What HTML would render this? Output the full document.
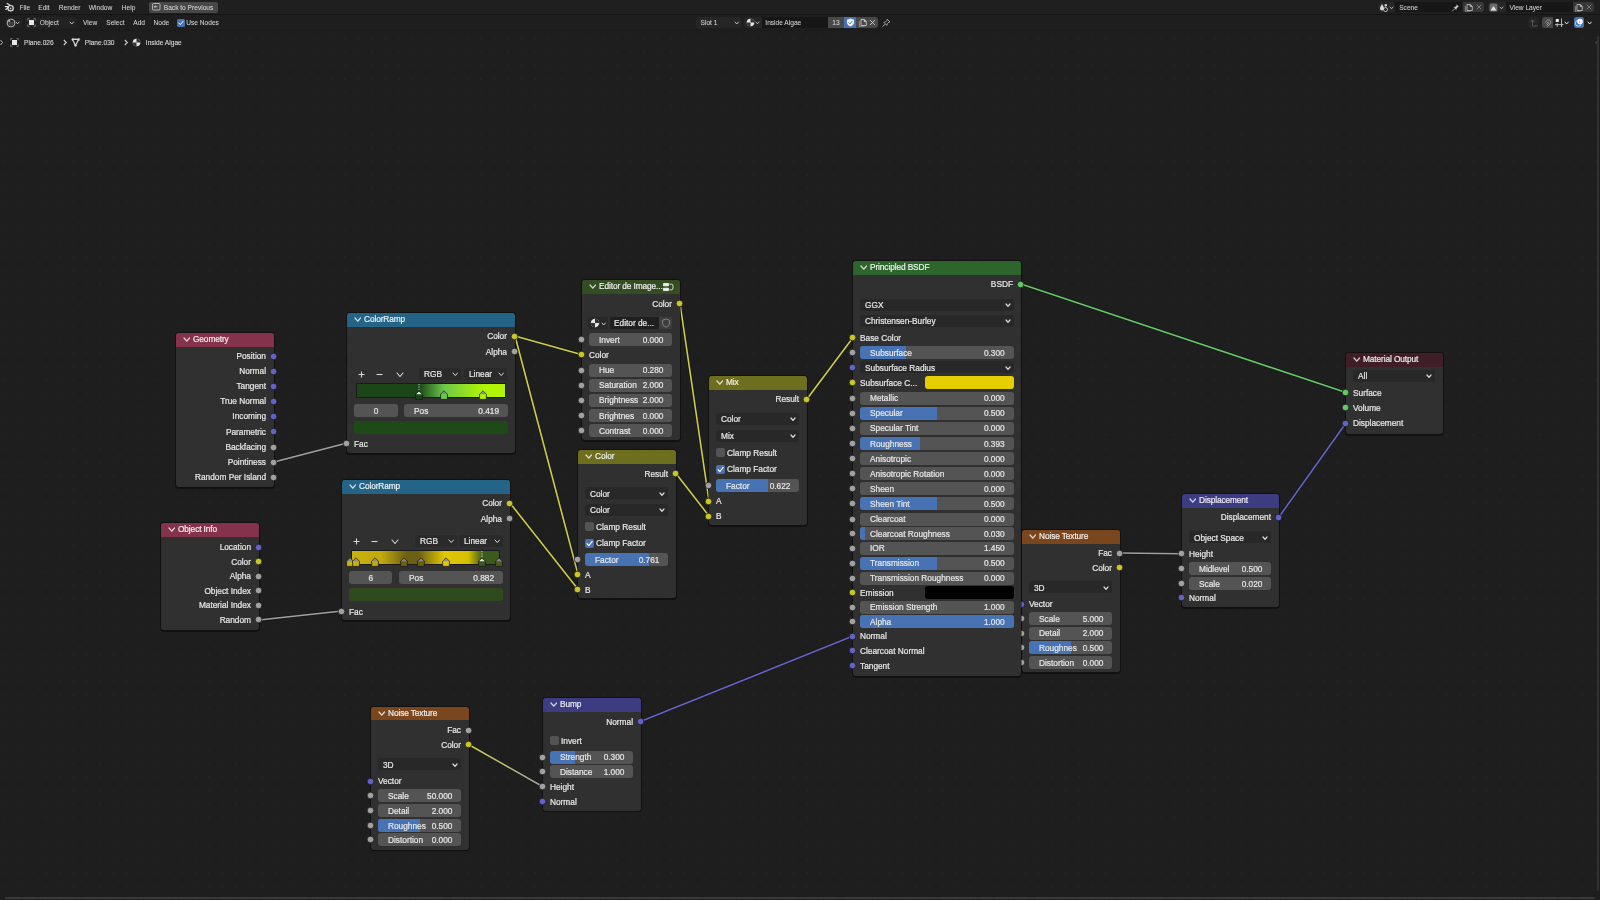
<!DOCTYPE html><html><head><meta charset="utf-8"><style>
html,body{margin:0;padding:0}body{width:1600px;height:900px;background:#1e1e1e;overflow:hidden;position:relative;font-family:"Liberation Sans",sans-serif}
.a{position:absolute}.t{position:absolute;white-space:nowrap;font-size:8px;-webkit-text-stroke:0.22px currentColor}#w{position:absolute;left:0;top:0;width:1600px;height:900px;will-change:transform}
</style></head><body><div id="w">
<div class="a" style="left:0;top:31px;width:1600px;height:869px;background-image:radial-gradient(circle at 1px 1px, #232323 0.7px, transparent 1.1px);background-size:13.6px 13.7px;background-position:4px 6px"></div>
<svg class="a" style="left:0;top:0" width="1600" height="900"><defs><linearGradient id="lg0" gradientUnits="userSpaceOnUse" x1="274" y1="462" x2="347" y2="443"><stop offset="0" stop-color="#a1a1a1"/><stop offset="1" stop-color="#a1a1a1"/></linearGradient><linearGradient id="lg1" gradientUnits="userSpaceOnUse" x1="259" y1="620" x2="342" y2="611"><stop offset="0" stop-color="#a1a1a1"/><stop offset="1" stop-color="#a1a1a1"/></linearGradient><linearGradient id="lg2" gradientUnits="userSpaceOnUse" x1="515" y1="336" x2="582" y2="354.7"><stop offset="0" stop-color="#cdcd4a"/><stop offset="1" stop-color="#cdcd4a"/></linearGradient><linearGradient id="lg3" gradientUnits="userSpaceOnUse" x1="515" y1="336" x2="578" y2="574.4"><stop offset="0" stop-color="#cdcd4a"/><stop offset="1" stop-color="#cdcd4a"/></linearGradient><linearGradient id="lg4" gradientUnits="userSpaceOnUse" x1="510" y1="503" x2="578" y2="589.2"><stop offset="0" stop-color="#cdcd4a"/><stop offset="1" stop-color="#cdcd4a"/></linearGradient><linearGradient id="lg5" gradientUnits="userSpaceOnUse" x1="680" y1="303.5" x2="709" y2="501"><stop offset="0" stop-color="#cdcd4a"/><stop offset="1" stop-color="#cdcd4a"/></linearGradient><linearGradient id="lg6" gradientUnits="userSpaceOnUse" x1="676" y1="473.4" x2="709" y2="516"><stop offset="0" stop-color="#cdcd4a"/><stop offset="1" stop-color="#cdcd4a"/></linearGradient><linearGradient id="lg7" gradientUnits="userSpaceOnUse" x1="807" y1="399" x2="853" y2="337.4"><stop offset="0" stop-color="#cdcd4a"/><stop offset="1" stop-color="#cdcd4a"/></linearGradient><linearGradient id="lg8" gradientUnits="userSpaceOnUse" x1="1021" y1="284" x2="1346" y2="392.5"><stop offset="0" stop-color="#63c763"/><stop offset="1" stop-color="#63c763"/></linearGradient><linearGradient id="lg9" gradientUnits="userSpaceOnUse" x1="1279" y1="517" x2="1346" y2="423"><stop offset="0" stop-color="#6363c7"/><stop offset="1" stop-color="#6363c7"/></linearGradient><linearGradient id="lg10" gradientUnits="userSpaceOnUse" x1="1120" y1="553" x2="1182" y2="553.8"><stop offset="0" stop-color="#a1a1a1"/><stop offset="1" stop-color="#a1a1a1"/></linearGradient><linearGradient id="lg11" gradientUnits="userSpaceOnUse" x1="469" y1="744.8" x2="543" y2="786.7"><stop offset="0" stop-color="#cdcd4a"/><stop offset="1" stop-color="#a1a1a1"/></linearGradient><linearGradient id="lg12" gradientUnits="userSpaceOnUse" x1="641" y1="721.2" x2="853" y2="636"><stop offset="0" stop-color="#6363c7"/><stop offset="1" stop-color="#6363c7"/></linearGradient></defs><line x1="274" y1="462" x2="347" y2="443" stroke="#101010" stroke-width="2.8" stroke-opacity="0.6"/><line x1="274" y1="462" x2="347" y2="443" stroke="url(#lg0)" stroke-width="1.6"/><line x1="259" y1="620" x2="342" y2="611" stroke="#101010" stroke-width="2.8" stroke-opacity="0.6"/><line x1="259" y1="620" x2="342" y2="611" stroke="url(#lg1)" stroke-width="1.6"/><line x1="515" y1="336" x2="582" y2="354.7" stroke="#101010" stroke-width="2.8" stroke-opacity="0.6"/><line x1="515" y1="336" x2="582" y2="354.7" stroke="url(#lg2)" stroke-width="1.6"/><line x1="515" y1="336" x2="578" y2="574.4" stroke="#101010" stroke-width="2.8" stroke-opacity="0.6"/><line x1="515" y1="336" x2="578" y2="574.4" stroke="url(#lg3)" stroke-width="1.6"/><line x1="510" y1="503" x2="578" y2="589.2" stroke="#101010" stroke-width="2.8" stroke-opacity="0.6"/><line x1="510" y1="503" x2="578" y2="589.2" stroke="url(#lg4)" stroke-width="1.6"/><line x1="680" y1="303.5" x2="709" y2="501" stroke="#101010" stroke-width="2.8" stroke-opacity="0.6"/><line x1="680" y1="303.5" x2="709" y2="501" stroke="url(#lg5)" stroke-width="1.6"/><line x1="676" y1="473.4" x2="709" y2="516" stroke="#101010" stroke-width="2.8" stroke-opacity="0.6"/><line x1="676" y1="473.4" x2="709" y2="516" stroke="url(#lg6)" stroke-width="1.6"/><line x1="807" y1="399" x2="853" y2="337.4" stroke="#101010" stroke-width="2.8" stroke-opacity="0.6"/><line x1="807" y1="399" x2="853" y2="337.4" stroke="url(#lg7)" stroke-width="1.6"/><line x1="1021" y1="284" x2="1346" y2="392.5" stroke="#101010" stroke-width="2.8" stroke-opacity="0.6"/><line x1="1021" y1="284" x2="1346" y2="392.5" stroke="url(#lg8)" stroke-width="1.6"/><line x1="1279" y1="517" x2="1346" y2="423" stroke="#101010" stroke-width="2.8" stroke-opacity="0.6"/><line x1="1279" y1="517" x2="1346" y2="423" stroke="url(#lg9)" stroke-width="1.6"/><line x1="1120" y1="553" x2="1182" y2="553.8" stroke="#101010" stroke-width="2.8" stroke-opacity="0.6"/><line x1="1120" y1="553" x2="1182" y2="553.8" stroke="url(#lg10)" stroke-width="1.6"/><line x1="469" y1="744.8" x2="543" y2="786.7" stroke="#101010" stroke-width="2.8" stroke-opacity="0.6"/><line x1="469" y1="744.8" x2="543" y2="786.7" stroke="url(#lg11)" stroke-width="1.6"/><line x1="641" y1="721.2" x2="853" y2="636" stroke="#101010" stroke-width="2.8" stroke-opacity="0.6"/><line x1="641" y1="721.2" x2="853" y2="636" stroke="url(#lg12)" stroke-width="1.6"/></svg>
<div class="a" style="left:175.0px;top:332.0px;width:100.0px;height:156.8px;background:rgba(0,0,0,0.42);border-radius:4px;"></div>
<div class="a" style="left:176.0px;top:333.0px;width:98.0px;height:154.0px;background:#303030;border-radius:3px;"></div>
<div class="a" style="left:176.0px;top:333.0px;width:98.0px;height:13.5px;background:#85334d;border-radius:3px;border-bottom-left-radius:0;border-bottom-right-radius:0;"></div>
<svg class="a" style="left:182.5px;top:337.1px;" width="7.6" height="5.2" viewBox="0 0 7.6 5.2"><polyline points="1,1 3.8,4.2 6.6,1" fill="none" stroke="rgba(255,255,255,0.78)" stroke-width="1.3" stroke-linecap="round" stroke-linejoin="round"/></svg>
<div class="t" style="left:193.0px;top:333.3px;font-size:8.3px;line-height:12px;color:rgba(255,255,255,0.86);letter-spacing:-0.1px">Geometry</div>
<div class="t" style="right:1334.0px;top:350.4px;font-size:8.3px;line-height:12px;color:#e6e6e6;">Position</div>
<svg class="a" style="left:269.2px;top:351.5px;" width="9" height="9" viewBox="0 0 9 9"><circle cx="4.5" cy="4.5" r="3.3" fill="#6363c7" stroke="#141414" stroke-width="0.7"/></svg>
<div class="t" style="right:1334.0px;top:365.4px;font-size:8.3px;line-height:12px;color:#e6e6e6;">Normal</div>
<svg class="a" style="left:269.2px;top:366.5px;" width="9" height="9" viewBox="0 0 9 9"><circle cx="4.5" cy="4.5" r="3.3" fill="#6363c7" stroke="#141414" stroke-width="0.7"/></svg>
<div class="t" style="right:1334.0px;top:380.4px;font-size:8.3px;line-height:12px;color:#e6e6e6;">Tangent</div>
<svg class="a" style="left:269.2px;top:381.5px;" width="9" height="9" viewBox="0 0 9 9"><circle cx="4.5" cy="4.5" r="3.3" fill="#6363c7" stroke="#141414" stroke-width="0.7"/></svg>
<div class="t" style="right:1334.0px;top:395.4px;font-size:8.3px;line-height:12px;color:#e6e6e6;">True Normal</div>
<svg class="a" style="left:269.2px;top:396.5px;" width="9" height="9" viewBox="0 0 9 9"><circle cx="4.5" cy="4.5" r="3.3" fill="#6363c7" stroke="#141414" stroke-width="0.7"/></svg>
<div class="t" style="right:1334.0px;top:410.4px;font-size:8.3px;line-height:12px;color:#e6e6e6;">Incoming</div>
<svg class="a" style="left:269.2px;top:411.5px;" width="9" height="9" viewBox="0 0 9 9"><circle cx="4.5" cy="4.5" r="3.3" fill="#6363c7" stroke="#141414" stroke-width="0.7"/></svg>
<div class="t" style="right:1334.0px;top:425.9px;font-size:8.3px;line-height:12px;color:#e6e6e6;">Parametric</div>
<svg class="a" style="left:269.2px;top:427.0px;" width="9" height="9" viewBox="0 0 9 9"><circle cx="4.5" cy="4.5" r="3.3" fill="#6363c7" stroke="#141414" stroke-width="0.7"/></svg>
<div class="t" style="right:1334.0px;top:441.4px;font-size:8.3px;line-height:12px;color:#e6e6e6;">Backfacing</div>
<svg class="a" style="left:269.2px;top:442.5px;" width="9" height="9" viewBox="0 0 9 9"><circle cx="4.5" cy="4.5" r="3.3" fill="#a1a1a1" stroke="#141414" stroke-width="0.7"/></svg>
<div class="t" style="right:1334.0px;top:456.4px;font-size:8.3px;line-height:12px;color:#e6e6e6;">Pointiness</div>
<svg class="a" style="left:269.2px;top:457.5px;" width="9" height="9" viewBox="0 0 9 9"><circle cx="4.5" cy="4.5" r="3.3" fill="#a1a1a1" stroke="#141414" stroke-width="0.7"/></svg>
<div class="t" style="right:1334.0px;top:471.4px;font-size:8.3px;line-height:12px;color:#e6e6e6;">Random Per Island</div>
<svg class="a" style="left:269.2px;top:472.5px;" width="9" height="9" viewBox="0 0 9 9"><circle cx="4.5" cy="4.5" r="3.3" fill="#a1a1a1" stroke="#141414" stroke-width="0.7"/></svg>
<div class="a" style="left:160.0px;top:522.0px;width:100.0px;height:109.8px;background:rgba(0,0,0,0.42);border-radius:4px;"></div>
<div class="a" style="left:161.0px;top:523.0px;width:98.0px;height:107.0px;background:#303030;border-radius:3px;"></div>
<div class="a" style="left:161.0px;top:523.0px;width:98.0px;height:13.5px;background:#85334d;border-radius:3px;border-bottom-left-radius:0;border-bottom-right-radius:0;"></div>
<svg class="a" style="left:167.5px;top:527.1px;" width="7.6" height="5.2" viewBox="0 0 7.6 5.2"><polyline points="1,1 3.8,4.2 6.6,1" fill="none" stroke="rgba(255,255,255,0.78)" stroke-width="1.3" stroke-linecap="round" stroke-linejoin="round"/></svg>
<div class="t" style="left:178.0px;top:523.4px;font-size:8.3px;line-height:12px;color:rgba(255,255,255,0.86);letter-spacing:-0.1px">Object Info</div>
<div class="t" style="right:1349.0px;top:541.4px;font-size:8.3px;line-height:12px;color:#e6e6e6;">Location</div>
<svg class="a" style="left:254.2px;top:542.5px;" width="9" height="9" viewBox="0 0 9 9"><circle cx="4.5" cy="4.5" r="3.3" fill="#6363c7" stroke="#141414" stroke-width="0.7"/></svg>
<div class="t" style="right:1349.0px;top:555.7px;font-size:8.3px;line-height:12px;color:#e6e6e6;">Color</div>
<svg class="a" style="left:254.2px;top:556.8px;" width="9" height="9" viewBox="0 0 9 9"><circle cx="4.5" cy="4.5" r="3.3" fill="#c7c729" stroke="#141414" stroke-width="0.7"/></svg>
<div class="t" style="right:1349.0px;top:570.4px;font-size:8.3px;line-height:12px;color:#e6e6e6;">Alpha</div>
<svg class="a" style="left:254.2px;top:571.5px;" width="9" height="9" viewBox="0 0 9 9"><circle cx="4.5" cy="4.5" r="3.3" fill="#a1a1a1" stroke="#141414" stroke-width="0.7"/></svg>
<div class="t" style="right:1349.0px;top:584.9px;font-size:8.3px;line-height:12px;color:#e6e6e6;">Object Index</div>
<svg class="a" style="left:254.2px;top:586.0px;" width="9" height="9" viewBox="0 0 9 9"><circle cx="4.5" cy="4.5" r="3.3" fill="#a1a1a1" stroke="#141414" stroke-width="0.7"/></svg>
<div class="t" style="right:1349.0px;top:599.4px;font-size:8.3px;line-height:12px;color:#e6e6e6;">Material Index</div>
<svg class="a" style="left:254.2px;top:600.5px;" width="9" height="9" viewBox="0 0 9 9"><circle cx="4.5" cy="4.5" r="3.3" fill="#a1a1a1" stroke="#141414" stroke-width="0.7"/></svg>
<div class="t" style="right:1349.0px;top:614.0px;font-size:8.3px;line-height:12px;color:#e6e6e6;">Random</div>
<svg class="a" style="left:254.2px;top:615.1px;" width="9" height="9" viewBox="0 0 9 9"><circle cx="4.5" cy="4.5" r="3.3" fill="#a1a1a1" stroke="#141414" stroke-width="0.7"/></svg>
<div class="a" style="left:346.0px;top:312.0px;width:170.0px;height:142.8px;background:rgba(0,0,0,0.42);border-radius:4px;"></div>
<div class="a" style="left:347.0px;top:313.0px;width:168.0px;height:140.0px;background:#303030;border-radius:3px;"></div>
<div class="a" style="left:347.0px;top:313.0px;width:168.0px;height:13.5px;background:#246486;border-radius:3px;border-bottom-left-radius:0;border-bottom-right-radius:0;"></div>
<svg class="a" style="left:353.5px;top:317.1px;" width="7.6" height="5.2" viewBox="0 0 7.6 5.2"><polyline points="1,1 3.8,4.2 6.6,1" fill="none" stroke="rgba(255,255,255,0.78)" stroke-width="1.3" stroke-linecap="round" stroke-linejoin="round"/></svg>
<div class="t" style="left:364.0px;top:313.3px;font-size:8.3px;line-height:12px;color:rgba(255,255,255,0.86);letter-spacing:-0.1px">ColorRamp</div>
<div class="t" style="right:1093.0px;top:330.4px;font-size:8.3px;line-height:12px;color:#e6e6e6;">Color</div>
<svg class="a" style="left:510.2px;top:331.5px;" width="9" height="9" viewBox="0 0 9 9"><circle cx="4.5" cy="4.5" r="3.3" fill="#c7c729" stroke="#141414" stroke-width="0.7"/></svg>
<div class="t" style="right:1093.0px;top:345.6px;font-size:8.3px;line-height:12px;color:#e6e6e6;">Alpha</div>
<svg class="a" style="left:510.2px;top:346.7px;" width="9" height="9" viewBox="0 0 9 9"><circle cx="4.5" cy="4.5" r="3.3" fill="#a1a1a1" stroke="#141414" stroke-width="0.7"/></svg>
<svg class="a" style="left:357.5px;top:370.5px;" width="7" height="7" viewBox="0 0 7 7"><path d="M3.5 0.5V6.5M0.5 3.5H6.5" stroke="#d8d8d8" stroke-width="1.1"/></svg>
<svg class="a" style="left:376.0px;top:370.5px;" width="7" height="7" viewBox="0 0 7 7"><path d="M0.5 3.5H6.5" stroke="#d8d8d8" stroke-width="1.1"/></svg>
<svg class="a" style="left:396.0px;top:371.8px;" width="8" height="5.5" viewBox="0 0 8 5.5"><polyline points="1,1 4.0,4.5 7,1" fill="none" stroke="#d8d8d8" stroke-width="1.1" stroke-linecap="round" stroke-linejoin="round"/></svg>
<div class="a" style="left:419.0px;top:368.0px;width:42.0px;height:12.0px;background:#2a2a2a;border-radius:3px;"></div>
<div class="t" style="left:424.0px;top:368.4px;font-size:8.3px;line-height:12px;color:#e6e6e6;">RGB</div>
<svg class="a" style="left:451.8px;top:372.2px;" width="6.5" height="4.6" viewBox="0 0 6.5 4.6"><polyline points="1,1 3.25,3.6 5.5,1" fill="none" stroke="#d8d8d8" stroke-width="1.0" stroke-linecap="round" stroke-linejoin="round"/></svg>
<div class="a" style="left:464.0px;top:368.0px;width:43.0px;height:12.0px;background:#2a2a2a;border-radius:3px;"></div>
<div class="t" style="left:469.0px;top:368.4px;font-size:8.3px;line-height:12px;color:#e6e6e6;">Linear</div>
<svg class="a" style="left:497.8px;top:372.2px;" width="6.5" height="4.6" viewBox="0 0 6.5 4.6"><polyline points="1,1 3.25,3.6 5.5,1" fill="none" stroke="#d8d8d8" stroke-width="1.0" stroke-linecap="round" stroke-linejoin="round"/></svg>
<div class="a" style="left:355.5px;top:383.0px;width:150.5px;height:15.0px;background:#1a1a1a;border-radius:1px;"></div>
<div class="a" style="left:356.5px;top:384.0px;width:148.5px;height:13.0px;background:linear-gradient(to right, #1b4718 0%, #1b4718 42%, #6cc84a 58.8%, #b2f500 85.5%, #b2f500 100%);border-radius:0px;"></div>
<svg class="a" style="left:414.7px;top:390.0px;" width="8" height="10" viewBox="0 0 8 10"><path d="M0.6 4.2 L4 0.8 L7.4 4.2 V9.4 H0.6 Z" fill="#1b4718" stroke="#1a1a1a" stroke-width="0.8"/><path d="M1.2 4.3 L4 1.5 L6.8 4.3 Z" fill="#e8e8e8"/></svg>
<svg class="a" style="left:417.7px;top:384.0px;" width="2" height="7" viewBox="0 0 2 7"><line x1="1" y1="0" x2="1" y2="7" stroke="#eeeeee" stroke-width="0.8" stroke-dasharray="1.2,1.2"/></svg>
<svg class="a" style="left:439.7px;top:390.0px;" width="8" height="10" viewBox="0 0 8 10"><path d="M0.6 4.2 L4 0.8 L7.4 4.2 V9.4 H0.6 Z" fill="#6cc84a" stroke="#1a1a1a" stroke-width="0.8"/><path d="M1.2 4.3 L4 1.5 L6.8 4.3 Z" fill="#8a8a8a"/></svg>
<svg class="a" style="left:479.3px;top:390.0px;" width="8" height="10" viewBox="0 0 8 10"><path d="M0.6 4.2 L4 0.8 L7.4 4.2 V9.4 H0.6 Z" fill="#b2f500" stroke="#1a1a1a" stroke-width="0.8"/><path d="M1.2 4.3 L4 1.5 L6.8 4.3 Z" fill="#8a8a8a"/></svg>
<div class="a" style="left:354.0px;top:404.0px;width:44.0px;height:13.0px;background:#545454;border-radius:3px;"></div>
<div class="t" style="left:276.0px;width:200px;text-align:center;top:404.9px;font-size:8.3px;line-height:12px;color:#e6e6e6;">0</div>
<div class="a" style="left:404.0px;top:404.0px;width:104.0px;height:13.0px;background:#545454;border-radius:3px;"></div>
<div class="t" style="left:414.0px;top:404.9px;font-size:8.3px;line-height:12px;color:#e6e6e6;">Pos</div>
<div class="t" style="right:1101.0px;top:404.9px;font-size:8.3px;line-height:12px;color:#e6e6e6;">0.419</div>
<div class="a" style="left:354.0px;top:420.5px;width:154.0px;height:13.0px;background:#1e4a17;border-radius:3px;"></div>
<div class="t" style="left:354.0px;top:437.7px;font-size:8.3px;line-height:12px;color:#e6e6e6;">Fac</div>
<svg class="a" style="left:342.2px;top:438.8px;" width="9" height="9" viewBox="0 0 9 9"><circle cx="4.5" cy="4.5" r="3.3" fill="#a1a1a1" stroke="#141414" stroke-width="0.7"/></svg>
<div class="a" style="left:341.0px;top:479.0px;width:170.0px;height:142.8px;background:rgba(0,0,0,0.42);border-radius:4px;"></div>
<div class="a" style="left:342.0px;top:480.0px;width:168.0px;height:140.0px;background:#303030;border-radius:3px;"></div>
<div class="a" style="left:342.0px;top:480.0px;width:168.0px;height:13.5px;background:#246486;border-radius:3px;border-bottom-left-radius:0;border-bottom-right-radius:0;"></div>
<svg class="a" style="left:348.5px;top:484.1px;" width="7.6" height="5.2" viewBox="0 0 7.6 5.2"><polyline points="1,1 3.8,4.2 6.6,1" fill="none" stroke="rgba(255,255,255,0.78)" stroke-width="1.3" stroke-linecap="round" stroke-linejoin="round"/></svg>
<div class="t" style="left:359.0px;top:480.3px;font-size:8.3px;line-height:12px;color:rgba(255,255,255,0.86);letter-spacing:-0.1px">ColorRamp</div>
<div class="t" style="right:1098.0px;top:497.4px;font-size:8.3px;line-height:12px;color:#e6e6e6;">Color</div>
<svg class="a" style="left:505.2px;top:498.5px;" width="9" height="9" viewBox="0 0 9 9"><circle cx="4.5" cy="4.5" r="3.3" fill="#c7c729" stroke="#141414" stroke-width="0.7"/></svg>
<div class="t" style="right:1098.0px;top:512.7px;font-size:8.3px;line-height:12px;color:#e6e6e6;">Alpha</div>
<svg class="a" style="left:505.2px;top:513.8px;" width="9" height="9" viewBox="0 0 9 9"><circle cx="4.5" cy="4.5" r="3.3" fill="#a1a1a1" stroke="#141414" stroke-width="0.7"/></svg>
<svg class="a" style="left:352.5px;top:537.5px;" width="7" height="7" viewBox="0 0 7 7"><path d="M3.5 0.5V6.5M0.5 3.5H6.5" stroke="#d8d8d8" stroke-width="1.1"/></svg>
<svg class="a" style="left:371.0px;top:537.5px;" width="7" height="7" viewBox="0 0 7 7"><path d="M0.5 3.5H6.5" stroke="#d8d8d8" stroke-width="1.1"/></svg>
<svg class="a" style="left:391.0px;top:538.8px;" width="8" height="5.5" viewBox="0 0 8 5.5"><polyline points="1,1 4.0,4.5 7,1" fill="none" stroke="#d8d8d8" stroke-width="1.1" stroke-linecap="round" stroke-linejoin="round"/></svg>
<div class="a" style="left:415.0px;top:535.0px;width:42.4px;height:12.0px;background:#2a2a2a;border-radius:3px;"></div>
<div class="t" style="left:420.0px;top:535.4px;font-size:8.3px;line-height:12px;color:#e6e6e6;">RGB</div>
<svg class="a" style="left:448.1px;top:539.2px;" width="6.5" height="4.6" viewBox="0 0 6.5 4.6"><polyline points="1,1 3.25,3.6 5.5,1" fill="none" stroke="#d8d8d8" stroke-width="1.0" stroke-linecap="round" stroke-linejoin="round"/></svg>
<div class="a" style="left:459.0px;top:535.0px;width:44.0px;height:12.0px;background:#2a2a2a;border-radius:3px;"></div>
<div class="t" style="left:464.0px;top:535.4px;font-size:8.3px;line-height:12px;color:#e6e6e6;">Linear</div>
<svg class="a" style="left:493.8px;top:539.2px;" width="6.5" height="4.6" viewBox="0 0 6.5 4.6"><polyline points="1,1 3.25,3.6 5.5,1" fill="none" stroke="#d8d8d8" stroke-width="1.0" stroke-linecap="round" stroke-linejoin="round"/></svg>
<div class="a" style="left:350.7px;top:550.0px;width:149.7px;height:15.0px;background:#1a1a1a;border-radius:1px;"></div>
<div class="a" style="left:351.7px;top:551.0px;width:147.7px;height:13.0px;background:linear-gradient(to right, #c9b20c 0%, #c2a90e 20%, #6d6012 37%, #6b5f14 45%, #e3c800 63%, #d7c000 79%, #3b5a1e 89%, #3b5a1e 100%);border-radius:0px;"></div>
<svg class="a" style="left:346.2px;top:557.0px;" width="8" height="10" viewBox="0 0 8 10"><path d="M0.6 4.2 L4 0.8 L7.4 4.2 V9.4 H0.6 Z" fill="#c9b20c" stroke="#1a1a1a" stroke-width="0.8"/><path d="M1.2 4.3 L4 1.5 L6.8 4.3 Z" fill="#8a8a8a"/></svg>
<svg class="a" style="left:351.8px;top:557.0px;" width="8" height="10" viewBox="0 0 8 10"><path d="M0.6 4.2 L4 0.8 L7.4 4.2 V9.4 H0.6 Z" fill="#c9b20c" stroke="#1a1a1a" stroke-width="0.8"/><path d="M1.2 4.3 L4 1.5 L6.8 4.3 Z" fill="#8a8a8a"/></svg>
<svg class="a" style="left:370.9px;top:557.0px;" width="8" height="10" viewBox="0 0 8 10"><path d="M0.6 4.2 L4 0.8 L7.4 4.2 V9.4 H0.6 Z" fill="#c2a90e" stroke="#1a1a1a" stroke-width="0.8"/><path d="M1.2 4.3 L4 1.5 L6.8 4.3 Z" fill="#8a8a8a"/></svg>
<svg class="a" style="left:399.8px;top:557.0px;" width="8" height="10" viewBox="0 0 8 10"><path d="M0.6 4.2 L4 0.8 L7.4 4.2 V9.4 H0.6 Z" fill="#6d6012" stroke="#1a1a1a" stroke-width="0.8"/><path d="M1.2 4.3 L4 1.5 L6.8 4.3 Z" fill="#8a8a8a"/></svg>
<svg class="a" style="left:417.3px;top:557.0px;" width="8" height="10" viewBox="0 0 8 10"><path d="M0.6 4.2 L4 0.8 L7.4 4.2 V9.4 H0.6 Z" fill="#6b5f14" stroke="#1a1a1a" stroke-width="0.8"/><path d="M1.2 4.3 L4 1.5 L6.8 4.3 Z" fill="#8a8a8a"/></svg>
<svg class="a" style="left:441.8px;top:557.0px;" width="8" height="10" viewBox="0 0 8 10"><path d="M0.6 4.2 L4 0.8 L7.4 4.2 V9.4 H0.6 Z" fill="#e3c800" stroke="#1a1a1a" stroke-width="0.8"/><path d="M1.2 4.3 L4 1.5 L6.8 4.3 Z" fill="#8a8a8a"/></svg>
<svg class="a" style="left:478.2px;top:557.0px;" width="8" height="10" viewBox="0 0 8 10"><path d="M0.6 4.2 L4 0.8 L7.4 4.2 V9.4 H0.6 Z" fill="#3b5a1e" stroke="#1a1a1a" stroke-width="0.8"/><path d="M1.2 4.3 L4 1.5 L6.8 4.3 Z" fill="#e8e8e8"/></svg>
<svg class="a" style="left:481.2px;top:551.0px;" width="2" height="7" viewBox="0 0 2 7"><line x1="1" y1="0" x2="1" y2="7" stroke="#eeeeee" stroke-width="0.8" stroke-dasharray="1.2,1.2"/></svg>
<svg class="a" style="left:495.4px;top:557.0px;" width="8" height="10" viewBox="0 0 8 10"><path d="M0.6 4.2 L4 0.8 L7.4 4.2 V9.4 H0.6 Z" fill="#4a5a1e" stroke="#1a1a1a" stroke-width="0.8"/><path d="M1.2 4.3 L4 1.5 L6.8 4.3 Z" fill="#8a8a8a"/></svg>
<div class="a" style="left:349.0px;top:571.2px;width:43.4px;height:12.8px;background:#545454;border-radius:3px;"></div>
<div class="t" style="left:270.7px;width:200px;text-align:center;top:572.0px;font-size:8.3px;line-height:12px;color:#e6e6e6;">6</div>
<div class="a" style="left:399.0px;top:571.2px;width:104.0px;height:12.8px;background:#545454;border-radius:3px;"></div>
<div class="t" style="left:409.0px;top:572.0px;font-size:8.3px;line-height:12px;color:#e6e6e6;">Pos</div>
<div class="t" style="right:1106.0px;top:572.0px;font-size:8.3px;line-height:12px;color:#e6e6e6;">0.882</div>
<div class="a" style="left:349.0px;top:588.0px;width:154.0px;height:12.6px;background:#2f4a1c;border-radius:3px;"></div>
<div class="t" style="left:349.0px;top:605.6px;font-size:8.3px;line-height:12px;color:#e6e6e6;">Fac</div>
<svg class="a" style="left:337.2px;top:606.7px;" width="9" height="9" viewBox="0 0 9 9"><circle cx="4.5" cy="4.5" r="3.3" fill="#a1a1a1" stroke="#141414" stroke-width="0.7"/></svg>
<div class="a" style="left:581.0px;top:279.0px;width:100.0px;height:162.8px;background:rgba(0,0,0,0.42);border-radius:4px;"></div>
<div class="a" style="left:582.0px;top:280.0px;width:98.0px;height:160.0px;background:#303030;border-radius:3px;"></div>
<div class="a" style="left:582.0px;top:280.0px;width:98.0px;height:13.5px;background:#344d22;border-radius:3px;border-bottom-left-radius:0;border-bottom-right-radius:0;"></div>
<svg class="a" style="left:588.5px;top:284.1px;" width="7.6" height="5.2" viewBox="0 0 7.6 5.2"><polyline points="1,1 3.8,4.2 6.6,1" fill="none" stroke="rgba(255,255,255,0.78)" stroke-width="1.3" stroke-linecap="round" stroke-linejoin="round"/></svg>
<div class="t" style="left:599.0px;top:280.3px;font-size:8.3px;line-height:12px;color:rgba(255,255,255,0.86);letter-spacing:-0.1px">Editor de Image...</div>
<svg class="a" style="left:662.0px;top:282.0px;" width="12" height="10" viewBox="0 0 12 10"><rect x="1" y="1" width="6" height="3.2" rx="0.8" fill="#e8e8e8"/><rect x="1" y="5.8" width="6" height="3.2" rx="0.8" fill="#e8e8e8"/><path d="M7.5 2.2 H9.5 Q11 2.2 11 4 V6 Q11 7.8 9.5 7.8 H7.5" fill="none" stroke="#e8e8e8" stroke-width="0.9"/></svg>
<div class="t" style="right:928.0px;top:297.9px;font-size:8.3px;line-height:12px;color:#e6e6e6;">Color</div>
<svg class="a" style="left:675.2px;top:299.0px;" width="9" height="9" viewBox="0 0 9 9"><circle cx="4.5" cy="4.5" r="3.3" fill="#c7c729" stroke="#141414" stroke-width="0.7"/></svg>
<div class="a" style="left:588.0px;top:317.0px;width:20.0px;height:12.0px;background:#282828;border-radius:3px;"></div>
<svg class="a" style="left:590.0px;top:318.0px;" width="10" height="10" viewBox="0 0 10 10"><circle cx="5" cy="5" r="4.2" fill="#e6e6e6"/><path d="M5 0.8 A4.2 4.2 0 0 1 9.2 5 H5 Z" fill="#303030"/><path d="M5 5 H0.8 A4.2 4.2 0 0 0 5 9.2 Z" fill="#303030"/></svg>
<svg class="a" style="left:601.2px;top:321.5px;" width="5.5" height="4" viewBox="0 0 5.5 4"><polyline points="1,1 2.75,3 4.5,1" fill="none" stroke="#d8d8d8" stroke-width="0.9" stroke-linecap="round" stroke-linejoin="round"/></svg>
<div class="a" style="left:610.0px;top:317.0px;width:49.0px;height:12.0px;background:#1f1f1f;border-radius:0px;"></div>
<div class="t" style="left:614.0px;top:317.4px;font-size:8.3px;line-height:12px;color:#e6e6e6;">Editor de...</div>
<div class="a" style="left:659.0px;top:317.0px;width:13.0px;height:12.0px;background:#3d3d3d;border-radius:2px;border-top-left-radius:0;border-bottom-left-radius:0;"></div>
<svg class="a" style="left:661.0px;top:318.0px;" width="10" height="10" viewBox="0 0 10 10"><path d="M5 1 L8.6 2.3 V5 Q8.6 8 5 9.2 Q1.4 8 1.4 5 V2.3 Z" fill="none" stroke="#8a8a8a" stroke-width="0.9"/></svg>
<div class="a" style="left:589.0px;top:333.2px;width:83.4px;height:13.0px;background:#545454;border-radius:3px;"></div>
<div class="t" style="left:599.0px;top:334.1px;font-size:8.3px;line-height:12px;color:#e6e6e6;">Invert</div>
<div class="t" style="right:936.6px;top:334.1px;font-size:8.3px;line-height:12px;color:#e6e6e6;">0.000</div>
<svg class="a" style="left:577.2px;top:335.2px;" width="9" height="9" viewBox="0 0 9 9"><circle cx="4.5" cy="4.5" r="3.3" fill="#a1a1a1" stroke="#141414" stroke-width="0.7"/></svg>
<div class="t" style="left:589.0px;top:349.1px;font-size:8.3px;line-height:12px;color:#e6e6e6;">Color</div>
<svg class="a" style="left:577.2px;top:350.2px;" width="9" height="9" viewBox="0 0 9 9"><circle cx="4.5" cy="4.5" r="3.3" fill="#c7c729" stroke="#141414" stroke-width="0.7"/></svg>
<div class="a" style="left:589.0px;top:363.5px;width:83.4px;height:13.0px;background:#545454;border-radius:3px;"></div>
<div class="t" style="left:599.0px;top:364.4px;font-size:8.3px;line-height:12px;color:#e6e6e6;">Hue</div>
<div class="t" style="right:936.6px;top:364.4px;font-size:8.3px;line-height:12px;color:#e6e6e6;">0.280</div>
<svg class="a" style="left:577.2px;top:365.5px;" width="9" height="9" viewBox="0 0 9 9"><circle cx="4.5" cy="4.5" r="3.3" fill="#a1a1a1" stroke="#141414" stroke-width="0.7"/></svg>
<div class="a" style="left:589.0px;top:378.5px;width:83.4px;height:13.0px;background:#545454;border-radius:3px;"></div>
<div class="t" style="left:599.0px;top:379.4px;font-size:8.3px;line-height:12px;color:#e6e6e6;">Saturation</div>
<div class="t" style="right:936.6px;top:379.4px;font-size:8.3px;line-height:12px;color:#e6e6e6;">2.000</div>
<svg class="a" style="left:577.2px;top:380.5px;" width="9" height="9" viewBox="0 0 9 9"><circle cx="4.5" cy="4.5" r="3.3" fill="#a1a1a1" stroke="#141414" stroke-width="0.7"/></svg>
<div class="a" style="left:589.0px;top:393.5px;width:83.4px;height:13.0px;background:#545454;border-radius:3px;"></div>
<div class="t" style="left:599.0px;top:394.4px;font-size:8.3px;line-height:12px;color:#e6e6e6;">Brightness</div>
<div class="t" style="right:936.6px;top:394.4px;font-size:8.3px;line-height:12px;color:#e6e6e6;">2.000</div>
<svg class="a" style="left:577.2px;top:395.5px;" width="9" height="9" viewBox="0 0 9 9"><circle cx="4.5" cy="4.5" r="3.3" fill="#a1a1a1" stroke="#141414" stroke-width="0.7"/></svg>
<div class="a" style="left:589.0px;top:409.0px;width:83.4px;height:13.0px;background:#545454;border-radius:3px;"></div>
<div class="t" style="left:599.0px;top:409.9px;font-size:8.3px;line-height:12px;color:#e6e6e6;">Brightnes</div>
<div class="t" style="right:936.6px;top:409.9px;font-size:8.3px;line-height:12px;color:#e6e6e6;">0.000</div>
<svg class="a" style="left:577.2px;top:411.0px;" width="9" height="9" viewBox="0 0 9 9"><circle cx="4.5" cy="4.5" r="3.3" fill="#a1a1a1" stroke="#141414" stroke-width="0.7"/></svg>
<div class="a" style="left:589.0px;top:424.0px;width:83.4px;height:13.0px;background:#545454;border-radius:3px;"></div>
<div class="t" style="left:599.0px;top:424.9px;font-size:8.3px;line-height:12px;color:#e6e6e6;">Contrast</div>
<div class="t" style="right:936.6px;top:424.9px;font-size:8.3px;line-height:12px;color:#e6e6e6;">0.000</div>
<svg class="a" style="left:577.2px;top:426.0px;" width="9" height="9" viewBox="0 0 9 9"><circle cx="4.5" cy="4.5" r="3.3" fill="#a1a1a1" stroke="#141414" stroke-width="0.7"/></svg>
<div class="a" style="left:577.0px;top:449.0px;width:100.0px;height:150.8px;background:rgba(0,0,0,0.42);border-radius:4px;"></div>
<div class="a" style="left:578.0px;top:450.0px;width:98.0px;height:148.0px;background:#303030;border-radius:3px;"></div>
<div class="a" style="left:578.0px;top:450.0px;width:98.0px;height:13.5px;background:#6e6e1f;border-radius:3px;border-bottom-left-radius:0;border-bottom-right-radius:0;"></div>
<svg class="a" style="left:584.5px;top:454.1px;" width="7.6" height="5.2" viewBox="0 0 7.6 5.2"><polyline points="1,1 3.8,4.2 6.6,1" fill="none" stroke="rgba(255,255,255,0.78)" stroke-width="1.3" stroke-linecap="round" stroke-linejoin="round"/></svg>
<div class="t" style="left:595.0px;top:450.3px;font-size:8.3px;line-height:12px;color:rgba(255,255,255,0.86);letter-spacing:-0.1px">Color</div>
<div class="t" style="right:932.0px;top:467.8px;font-size:8.3px;line-height:12px;color:#e6e6e6;">Result</div>
<svg class="a" style="left:671.2px;top:468.9px;" width="9" height="9" viewBox="0 0 9 9"><circle cx="4.5" cy="4.5" r="3.3" fill="#c7c729" stroke="#141414" stroke-width="0.7"/></svg>
<div class="a" style="left:585.0px;top:487.2px;width:83.4px;height:12.0px;background:#282828;border-radius:3px;"></div>
<div class="t" style="left:590.0px;top:487.6px;font-size:8.3px;line-height:12px;color:#e6e6e6;">Color</div>
<svg class="a" style="left:659.4px;top:491.5px;" width="6" height="4.4" viewBox="0 0 6 4.4"><polyline points="1,1 3.0,3.4 5,1" fill="none" stroke="#dcdcdc" stroke-width="1.2" stroke-linecap="round" stroke-linejoin="round"/></svg>
<div class="a" style="left:585.0px;top:504.0px;width:83.4px;height:12.0px;background:#282828;border-radius:3px;"></div>
<div class="t" style="left:590.0px;top:504.4px;font-size:8.3px;line-height:12px;color:#e6e6e6;">Color</div>
<svg class="a" style="left:659.4px;top:508.3px;" width="6" height="4.4" viewBox="0 0 6 4.4"><polyline points="1,1 3.0,3.4 5,1" fill="none" stroke="#dcdcdc" stroke-width="1.2" stroke-linecap="round" stroke-linejoin="round"/></svg>
<div class="a" style="left:585.0px;top:522.0px;width:9.0px;height:9.0px;background:#545454;border-radius:2px;"></div>
<div class="t" style="left:596.0px;top:520.9px;font-size:8.3px;line-height:12px;color:#e6e6e6;">Clamp Result</div>
<div class="a" style="left:585.0px;top:538.5px;width:9.0px;height:9.0px;background:#4772b3;border-radius:2px;"></div>
<svg class="a" style="left:585.0px;top:538.5px;" width="9" height="9" viewBox="0 0 9 9"><polyline points="2,4.6 3.8,6.6 7.2,2.4" fill="none" stroke="#fff" stroke-width="1.2" stroke-linecap="round" stroke-linejoin="round"/></svg>
<div class="t" style="left:596.0px;top:537.4px;font-size:8.3px;line-height:12px;color:#e6e6e6;">Clamp Factor</div>
<div class="a" style="left:585.0px;top:553.0px;width:83.4px;height:13.0px;background:#545454;border-radius:3px;"></div>
<div class="a" style="left:585.0px;top:553.0px;width:63.5px;height:13.0px;background:#4772b3;border-radius:3px;border-top-right-radius:0;border-bottom-right-radius:0;"></div>
<div class="t" style="left:595.0px;top:553.9px;font-size:8.3px;line-height:12px;color:#e6e6e6;">Factor</div>
<div class="t" style="right:940.6px;top:553.9px;font-size:8.3px;line-height:12px;color:#e6e6e6;">0.761</div>
<svg class="a" style="left:573.2px;top:555.0px;" width="9" height="9" viewBox="0 0 9 9"><circle cx="4.5" cy="4.5" r="3.3" fill="#a1a1a1" stroke="#141414" stroke-width="0.7"/></svg>
<div class="t" style="left:585.0px;top:568.8px;font-size:8.3px;line-height:12px;color:#e6e6e6;">A</div>
<svg class="a" style="left:573.2px;top:569.9px;" width="9" height="9" viewBox="0 0 9 9"><circle cx="4.5" cy="4.5" r="3.3" fill="#c7c729" stroke="#141414" stroke-width="0.7"/></svg>
<div class="t" style="left:585.0px;top:583.6px;font-size:8.3px;line-height:12px;color:#e6e6e6;">B</div>
<svg class="a" style="left:573.2px;top:584.7px;" width="9" height="9" viewBox="0 0 9 9"><circle cx="4.5" cy="4.5" r="3.3" fill="#c7c729" stroke="#141414" stroke-width="0.7"/></svg>
<div class="a" style="left:708.0px;top:375.0px;width:100.0px;height:151.8px;background:rgba(0,0,0,0.42);border-radius:4px;"></div>
<div class="a" style="left:709.0px;top:376.0px;width:98.0px;height:149.0px;background:#303030;border-radius:3px;"></div>
<div class="a" style="left:709.0px;top:376.0px;width:98.0px;height:13.5px;background:#6e6e1f;border-radius:3px;border-bottom-left-radius:0;border-bottom-right-radius:0;"></div>
<svg class="a" style="left:715.5px;top:380.1px;" width="7.6" height="5.2" viewBox="0 0 7.6 5.2"><polyline points="1,1 3.8,4.2 6.6,1" fill="none" stroke="rgba(255,255,255,0.78)" stroke-width="1.3" stroke-linecap="round" stroke-linejoin="round"/></svg>
<div class="t" style="left:726.0px;top:376.3px;font-size:8.3px;line-height:12px;color:rgba(255,255,255,0.86);letter-spacing:-0.1px">Mix</div>
<div class="t" style="right:801.0px;top:393.4px;font-size:8.3px;line-height:12px;color:#e6e6e6;">Result</div>
<svg class="a" style="left:802.2px;top:394.5px;" width="9" height="9" viewBox="0 0 9 9"><circle cx="4.5" cy="4.5" r="3.3" fill="#c7c729" stroke="#141414" stroke-width="0.7"/></svg>
<div class="a" style="left:716.0px;top:413.0px;width:83.4px;height:12.0px;background:#282828;border-radius:3px;"></div>
<div class="t" style="left:721.0px;top:413.4px;font-size:8.3px;line-height:12px;color:#e6e6e6;">Color</div>
<svg class="a" style="left:790.4px;top:417.3px;" width="6" height="4.4" viewBox="0 0 6 4.4"><polyline points="1,1 3.0,3.4 5,1" fill="none" stroke="#dcdcdc" stroke-width="1.2" stroke-linecap="round" stroke-linejoin="round"/></svg>
<div class="a" style="left:716.0px;top:429.5px;width:83.4px;height:12.0px;background:#282828;border-radius:3px;"></div>
<div class="t" style="left:721.0px;top:429.9px;font-size:8.3px;line-height:12px;color:#e6e6e6;">Mix</div>
<svg class="a" style="left:790.4px;top:433.8px;" width="6" height="4.4" viewBox="0 0 6 4.4"><polyline points="1,1 3.0,3.4 5,1" fill="none" stroke="#dcdcdc" stroke-width="1.2" stroke-linecap="round" stroke-linejoin="round"/></svg>
<div class="a" style="left:716.0px;top:447.8px;width:9.0px;height:9.0px;background:#545454;border-radius:2px;"></div>
<div class="t" style="left:727.0px;top:446.7px;font-size:8.3px;line-height:12px;color:#e6e6e6;">Clamp Result</div>
<div class="a" style="left:716.0px;top:464.5px;width:9.0px;height:9.0px;background:#4772b3;border-radius:2px;"></div>
<svg class="a" style="left:716.0px;top:464.5px;" width="9" height="9" viewBox="0 0 9 9"><polyline points="2,4.6 3.8,6.6 7.2,2.4" fill="none" stroke="#fff" stroke-width="1.2" stroke-linecap="round" stroke-linejoin="round"/></svg>
<div class="t" style="left:727.0px;top:463.4px;font-size:8.3px;line-height:12px;color:#e6e6e6;">Clamp Factor</div>
<div class="a" style="left:716.0px;top:479.0px;width:83.4px;height:13.0px;background:#545454;border-radius:3px;"></div>
<div class="a" style="left:716.0px;top:479.0px;width:51.9px;height:13.0px;background:#4772b3;border-radius:3px;border-top-right-radius:0;border-bottom-right-radius:0;"></div>
<div class="t" style="left:726.0px;top:479.9px;font-size:8.3px;line-height:12px;color:#e6e6e6;">Factor</div>
<div class="t" style="right:809.6px;top:479.9px;font-size:8.3px;line-height:12px;color:#e6e6e6;">0.622</div>
<svg class="a" style="left:704.2px;top:481.0px;" width="9" height="9" viewBox="0 0 9 9"><circle cx="4.5" cy="4.5" r="3.3" fill="#a1a1a1" stroke="#141414" stroke-width="0.7"/></svg>
<div class="t" style="left:716.0px;top:495.4px;font-size:8.3px;line-height:12px;color:#e6e6e6;">A</div>
<svg class="a" style="left:704.2px;top:496.5px;" width="9" height="9" viewBox="0 0 9 9"><circle cx="4.5" cy="4.5" r="3.3" fill="#c7c729" stroke="#141414" stroke-width="0.7"/></svg>
<div class="t" style="left:716.0px;top:510.4px;font-size:8.3px;line-height:12px;color:#e6e6e6;">B</div>
<svg class="a" style="left:704.2px;top:511.5px;" width="9" height="9" viewBox="0 0 9 9"><circle cx="4.5" cy="4.5" r="3.3" fill="#c7c729" stroke="#141414" stroke-width="0.7"/></svg>
<div class="a" style="left:1021.0px;top:529.0px;width:100.0px;height:144.8px;background:rgba(0,0,0,0.42);border-radius:4px;"></div>
<div class="a" style="left:1022.0px;top:530.0px;width:98.0px;height:142.0px;background:#303030;border-radius:3px;"></div>
<div class="a" style="left:1022.0px;top:530.0px;width:98.0px;height:13.5px;background:#7a461d;border-radius:3px;border-bottom-left-radius:0;border-bottom-right-radius:0;"></div>
<svg class="a" style="left:1028.5px;top:534.1px;" width="7.6" height="5.2" viewBox="0 0 7.6 5.2"><polyline points="1,1 3.8,4.2 6.6,1" fill="none" stroke="rgba(255,255,255,0.78)" stroke-width="1.3" stroke-linecap="round" stroke-linejoin="round"/></svg>
<div class="t" style="left:1039.0px;top:530.4px;font-size:8.3px;line-height:12px;color:rgba(255,255,255,0.86);letter-spacing:-0.1px">Noise Texture</div>
<div class="t" style="right:488.0px;top:547.4px;font-size:8.3px;line-height:12px;color:#e6e6e6;">Fac</div>
<svg class="a" style="left:1115.2px;top:548.5px;" width="9" height="9" viewBox="0 0 9 9"><circle cx="4.5" cy="4.5" r="3.3" fill="#a1a1a1" stroke="#141414" stroke-width="0.7"/></svg>
<div class="t" style="right:488.0px;top:561.9px;font-size:8.3px;line-height:12px;color:#e6e6e6;">Color</div>
<svg class="a" style="left:1115.2px;top:563.0px;" width="9" height="9" viewBox="0 0 9 9"><circle cx="4.5" cy="4.5" r="3.3" fill="#c7c729" stroke="#141414" stroke-width="0.7"/></svg>
<div class="a" style="left:1029.0px;top:581.2px;width:83.4px;height:12.0px;background:#282828;border-radius:3px;"></div>
<div class="t" style="left:1034.0px;top:581.6px;font-size:8.3px;line-height:12px;color:#e6e6e6;">3D</div>
<svg class="a" style="left:1103.4px;top:585.5px;" width="6" height="4.4" viewBox="0 0 6 4.4"><polyline points="1,1 3.0,3.4 5,1" fill="none" stroke="#dcdcdc" stroke-width="1.2" stroke-linecap="round" stroke-linejoin="round"/></svg>
<div class="t" style="left:1029.0px;top:598.4px;font-size:8.3px;line-height:12px;color:#e6e6e6;">Vector</div>
<svg class="a" style="left:1017.2px;top:599.5px;" width="9" height="9" viewBox="0 0 9 9"><circle cx="4.5" cy="4.5" r="3.3" fill="#6363c7" stroke="#141414" stroke-width="0.7"/></svg>
<div class="a" style="left:1029.0px;top:611.8px;width:83.4px;height:13.0px;background:#545454;border-radius:3px;"></div>
<div class="t" style="left:1039.0px;top:612.7px;font-size:8.3px;line-height:12px;color:#e6e6e6;">Scale</div>
<div class="t" style="right:496.6px;top:612.7px;font-size:8.3px;line-height:12px;color:#e6e6e6;">5.000</div>
<svg class="a" style="left:1017.2px;top:613.8px;" width="9" height="9" viewBox="0 0 9 9"><circle cx="4.5" cy="4.5" r="3.3" fill="#a1a1a1" stroke="#141414" stroke-width="0.7"/></svg>
<div class="a" style="left:1029.0px;top:626.5px;width:83.4px;height:13.0px;background:#545454;border-radius:3px;"></div>
<div class="t" style="left:1039.0px;top:627.4px;font-size:8.3px;line-height:12px;color:#e6e6e6;">Detail</div>
<div class="t" style="right:496.6px;top:627.4px;font-size:8.3px;line-height:12px;color:#e6e6e6;">2.000</div>
<svg class="a" style="left:1017.2px;top:628.5px;" width="9" height="9" viewBox="0 0 9 9"><circle cx="4.5" cy="4.5" r="3.3" fill="#a1a1a1" stroke="#141414" stroke-width="0.7"/></svg>
<div class="a" style="left:1029.0px;top:641.0px;width:83.4px;height:13.0px;background:#545454;border-radius:3px;"></div>
<div class="a" style="left:1029.0px;top:641.0px;width:41.7px;height:13.0px;background:#4772b3;border-radius:3px;border-top-right-radius:0;border-bottom-right-radius:0;"></div>
<div class="t" style="left:1039.0px;top:641.9px;font-size:8.3px;line-height:12px;color:#e6e6e6;">Roughnes</div>
<div class="t" style="right:496.6px;top:641.9px;font-size:8.3px;line-height:12px;color:#e6e6e6;">0.500</div>
<svg class="a" style="left:1017.2px;top:643.0px;" width="9" height="9" viewBox="0 0 9 9"><circle cx="4.5" cy="4.5" r="3.3" fill="#a1a1a1" stroke="#141414" stroke-width="0.7"/></svg>
<div class="a" style="left:1029.0px;top:655.7px;width:83.4px;height:13.0px;background:#545454;border-radius:3px;"></div>
<div class="t" style="left:1039.0px;top:656.6px;font-size:8.3px;line-height:12px;color:#e6e6e6;">Distortion</div>
<div class="t" style="right:496.6px;top:656.6px;font-size:8.3px;line-height:12px;color:#e6e6e6;">0.000</div>
<svg class="a" style="left:1017.2px;top:657.7px;" width="9" height="9" viewBox="0 0 9 9"><circle cx="4.5" cy="4.5" r="3.3" fill="#a1a1a1" stroke="#141414" stroke-width="0.7"/></svg>
<div class="a" style="left:852.0px;top:260.0px;width:170.0px;height:417.8px;background:rgba(0,0,0,0.42);border-radius:4px;"></div>
<div class="a" style="left:853.0px;top:261.0px;width:168.0px;height:415.0px;background:#303030;border-radius:3px;"></div>
<div class="a" style="left:853.0px;top:261.0px;width:168.0px;height:13.5px;background:#2d652c;border-radius:3px;border-bottom-left-radius:0;border-bottom-right-radius:0;"></div>
<svg class="a" style="left:859.5px;top:265.1px;" width="7.6" height="5.2" viewBox="0 0 7.6 5.2"><polyline points="1,1 3.8,4.2 6.6,1" fill="none" stroke="rgba(255,255,255,0.78)" stroke-width="1.3" stroke-linecap="round" stroke-linejoin="round"/></svg>
<div class="t" style="left:870.0px;top:261.3px;font-size:8.3px;line-height:12px;color:rgba(255,255,255,0.86);letter-spacing:-0.1px">Principled BSDF</div>
<div class="t" style="right:587.0px;top:278.4px;font-size:8.3px;line-height:12px;color:#e6e6e6;">BSDF</div>
<svg class="a" style="left:1016.2px;top:279.5px;" width="9" height="9" viewBox="0 0 9 9"><circle cx="4.5" cy="4.5" r="3.3" fill="#63c763" stroke="#141414" stroke-width="0.7"/></svg>
<div class="a" style="left:860.0px;top:298.5px;width:153.7px;height:12.0px;background:#282828;border-radius:3px;"></div>
<div class="t" style="left:865.0px;top:298.9px;font-size:8.3px;line-height:12px;color:#e6e6e6;">GGX</div>
<svg class="a" style="left:1004.7px;top:302.8px;" width="6" height="4.4" viewBox="0 0 6 4.4"><polyline points="1,1 3.0,3.4 5,1" fill="none" stroke="#dcdcdc" stroke-width="1.2" stroke-linecap="round" stroke-linejoin="round"/></svg>
<div class="a" style="left:860.0px;top:314.7px;width:153.7px;height:12.0px;background:#282828;border-radius:3px;"></div>
<div class="t" style="left:865.0px;top:315.1px;font-size:8.3px;line-height:12px;color:#e6e6e6;">Christensen-Burley</div>
<svg class="a" style="left:1004.7px;top:319.0px;" width="6" height="4.4" viewBox="0 0 6 4.4"><polyline points="1,1 3.0,3.4 5,1" fill="none" stroke="#dcdcdc" stroke-width="1.2" stroke-linecap="round" stroke-linejoin="round"/></svg>
<div class="t" style="left:860.0px;top:331.8px;font-size:8.3px;line-height:12px;color:#e6e6e6;">Base Color</div>
<svg class="a" style="left:848.2px;top:332.9px;" width="9" height="9" viewBox="0 0 9 9"><circle cx="4.5" cy="4.5" r="3.3" fill="#c7c729" stroke="#141414" stroke-width="0.7"/></svg>
<div class="a" style="left:860.0px;top:345.7px;width:153.7px;height:13.0px;background:#545454;border-radius:3px;"></div>
<div class="a" style="left:860.0px;top:345.7px;width:46.1px;height:13.0px;background:#4772b3;border-radius:3px;border-top-right-radius:0;border-bottom-right-radius:0;"></div>
<div class="t" style="left:870.0px;top:346.6px;font-size:8.3px;line-height:12px;color:#e6e6e6;">Subsurface</div>
<div class="t" style="right:595.3px;top:346.6px;font-size:8.3px;line-height:12px;color:#e6e6e6;">0.300</div>
<svg class="a" style="left:848.2px;top:347.7px;" width="9" height="9" viewBox="0 0 9 9"><circle cx="4.5" cy="4.5" r="3.3" fill="#a1a1a1" stroke="#141414" stroke-width="0.7"/></svg>
<div class="a" style="left:860.0px;top:361.3px;width:153.7px;height:12.0px;background:#282828;border-radius:3px;"></div>
<div class="t" style="left:865.0px;top:361.7px;font-size:8.3px;line-height:12px;color:#e6e6e6;">Subsurface Radius</div>
<svg class="a" style="left:1004.7px;top:365.6px;" width="6" height="4.4" viewBox="0 0 6 4.4"><polyline points="1,1 3.0,3.4 5,1" fill="none" stroke="#dcdcdc" stroke-width="1.2" stroke-linecap="round" stroke-linejoin="round"/></svg>
<svg class="a" style="left:848.2px;top:362.8px;" width="9" height="9" viewBox="0 0 9 9"><circle cx="4.5" cy="4.5" r="3.3" fill="#6363c7" stroke="#141414" stroke-width="0.7"/></svg>
<div class="t" style="left:860.0px;top:377.2px;font-size:8.3px;line-height:12px;color:#e6e6e6;">Subsurface C...</div>
<div class="a" style="left:925.0px;top:376.3px;width:88.7px;height:13.0px;background:#e6cf00;border-radius:3px;"></div>
<svg class="a" style="left:848.2px;top:378.3px;" width="9" height="9" viewBox="0 0 9 9"><circle cx="4.5" cy="4.5" r="3.3" fill="#c7c729" stroke="#141414" stroke-width="0.7"/></svg>
<div class="a" style="left:860.0px;top:391.5px;width:153.7px;height:13.0px;background:#545454;border-radius:3px;"></div>
<div class="t" style="left:870.0px;top:392.4px;font-size:8.3px;line-height:12px;color:#e6e6e6;">Metallic</div>
<div class="t" style="right:595.3px;top:392.4px;font-size:8.3px;line-height:12px;color:#e6e6e6;">0.000</div>
<svg class="a" style="left:848.2px;top:393.5px;" width="9" height="9" viewBox="0 0 9 9"><circle cx="4.5" cy="4.5" r="3.3" fill="#a1a1a1" stroke="#141414" stroke-width="0.7"/></svg>
<div class="a" style="left:860.0px;top:406.5px;width:153.7px;height:13.0px;background:#545454;border-radius:3px;"></div>
<div class="a" style="left:860.0px;top:406.5px;width:76.9px;height:13.0px;background:#4772b3;border-radius:3px;border-top-right-radius:0;border-bottom-right-radius:0;"></div>
<div class="t" style="left:870.0px;top:407.4px;font-size:8.3px;line-height:12px;color:#e6e6e6;">Specular</div>
<div class="t" style="right:595.3px;top:407.4px;font-size:8.3px;line-height:12px;color:#e6e6e6;">0.500</div>
<svg class="a" style="left:848.2px;top:408.5px;" width="9" height="9" viewBox="0 0 9 9"><circle cx="4.5" cy="4.5" r="3.3" fill="#a1a1a1" stroke="#141414" stroke-width="0.7"/></svg>
<div class="a" style="left:860.0px;top:421.5px;width:153.7px;height:13.0px;background:#545454;border-radius:3px;"></div>
<div class="t" style="left:870.0px;top:422.4px;font-size:8.3px;line-height:12px;color:#e6e6e6;">Specular Tint</div>
<div class="t" style="right:595.3px;top:422.4px;font-size:8.3px;line-height:12px;color:#e6e6e6;">0.000</div>
<svg class="a" style="left:848.2px;top:423.5px;" width="9" height="9" viewBox="0 0 9 9"><circle cx="4.5" cy="4.5" r="3.3" fill="#a1a1a1" stroke="#141414" stroke-width="0.7"/></svg>
<div class="a" style="left:860.0px;top:436.7px;width:153.7px;height:13.0px;background:#545454;border-radius:3px;"></div>
<div class="a" style="left:860.0px;top:436.7px;width:60.4px;height:13.0px;background:#4772b3;border-radius:3px;border-top-right-radius:0;border-bottom-right-radius:0;"></div>
<div class="t" style="left:870.0px;top:437.6px;font-size:8.3px;line-height:12px;color:#e6e6e6;">Roughness</div>
<div class="t" style="right:595.3px;top:437.6px;font-size:8.3px;line-height:12px;color:#e6e6e6;">0.393</div>
<svg class="a" style="left:848.2px;top:438.7px;" width="9" height="9" viewBox="0 0 9 9"><circle cx="4.5" cy="4.5" r="3.3" fill="#a1a1a1" stroke="#141414" stroke-width="0.7"/></svg>
<div class="a" style="left:860.0px;top:452.0px;width:153.7px;height:13.0px;background:#545454;border-radius:3px;"></div>
<div class="t" style="left:870.0px;top:452.9px;font-size:8.3px;line-height:12px;color:#e6e6e6;">Anisotropic</div>
<div class="t" style="right:595.3px;top:452.9px;font-size:8.3px;line-height:12px;color:#e6e6e6;">0.000</div>
<svg class="a" style="left:848.2px;top:454.0px;" width="9" height="9" viewBox="0 0 9 9"><circle cx="4.5" cy="4.5" r="3.3" fill="#a1a1a1" stroke="#141414" stroke-width="0.7"/></svg>
<div class="a" style="left:860.0px;top:466.9px;width:153.7px;height:13.0px;background:#545454;border-radius:3px;"></div>
<div class="t" style="left:870.0px;top:467.8px;font-size:8.3px;line-height:12px;color:#e6e6e6;">Anisotropic Rotation</div>
<div class="t" style="right:595.3px;top:467.8px;font-size:8.3px;line-height:12px;color:#e6e6e6;">0.000</div>
<svg class="a" style="left:848.2px;top:468.9px;" width="9" height="9" viewBox="0 0 9 9"><circle cx="4.5" cy="4.5" r="3.3" fill="#a1a1a1" stroke="#141414" stroke-width="0.7"/></svg>
<div class="a" style="left:860.0px;top:482.1px;width:153.7px;height:13.0px;background:#545454;border-radius:3px;"></div>
<div class="t" style="left:870.0px;top:483.0px;font-size:8.3px;line-height:12px;color:#e6e6e6;">Sheen</div>
<div class="t" style="right:595.3px;top:483.0px;font-size:8.3px;line-height:12px;color:#e6e6e6;">0.000</div>
<svg class="a" style="left:848.2px;top:484.1px;" width="9" height="9" viewBox="0 0 9 9"><circle cx="4.5" cy="4.5" r="3.3" fill="#a1a1a1" stroke="#141414" stroke-width="0.7"/></svg>
<div class="a" style="left:860.0px;top:497.3px;width:153.7px;height:13.0px;background:#545454;border-radius:3px;"></div>
<div class="a" style="left:860.0px;top:497.3px;width:76.9px;height:13.0px;background:#4772b3;border-radius:3px;border-top-right-radius:0;border-bottom-right-radius:0;"></div>
<div class="t" style="left:870.0px;top:498.2px;font-size:8.3px;line-height:12px;color:#e6e6e6;">Sheen Tint</div>
<div class="t" style="right:595.3px;top:498.2px;font-size:8.3px;line-height:12px;color:#e6e6e6;">0.500</div>
<svg class="a" style="left:848.2px;top:499.3px;" width="9" height="9" viewBox="0 0 9 9"><circle cx="4.5" cy="4.5" r="3.3" fill="#a1a1a1" stroke="#141414" stroke-width="0.7"/></svg>
<div class="a" style="left:860.0px;top:512.5px;width:153.7px;height:13.0px;background:#545454;border-radius:3px;"></div>
<div class="t" style="left:870.0px;top:513.4px;font-size:8.3px;line-height:12px;color:#e6e6e6;">Clearcoat</div>
<div class="t" style="right:595.3px;top:513.4px;font-size:8.3px;line-height:12px;color:#e6e6e6;">0.000</div>
<svg class="a" style="left:848.2px;top:514.5px;" width="9" height="9" viewBox="0 0 9 9"><circle cx="4.5" cy="4.5" r="3.3" fill="#a1a1a1" stroke="#141414" stroke-width="0.7"/></svg>
<div class="a" style="left:860.0px;top:527.1px;width:153.7px;height:13.0px;background:#545454;border-radius:3px;"></div>
<div class="a" style="left:860.0px;top:527.1px;width:4.6px;height:13.0px;background:#4772b3;border-radius:3px;border-top-right-radius:0;border-bottom-right-radius:0;"></div>
<div class="t" style="left:870.0px;top:528.0px;font-size:8.3px;line-height:12px;color:#e6e6e6;">Clearcoat Roughness</div>
<div class="t" style="right:595.3px;top:528.0px;font-size:8.3px;line-height:12px;color:#e6e6e6;">0.030</div>
<svg class="a" style="left:848.2px;top:529.1px;" width="9" height="9" viewBox="0 0 9 9"><circle cx="4.5" cy="4.5" r="3.3" fill="#a1a1a1" stroke="#141414" stroke-width="0.7"/></svg>
<div class="a" style="left:860.0px;top:541.5px;width:153.7px;height:13.0px;background:#545454;border-radius:3px;"></div>
<div class="t" style="left:870.0px;top:542.4px;font-size:8.3px;line-height:12px;color:#e6e6e6;">IOR</div>
<div class="t" style="right:595.3px;top:542.4px;font-size:8.3px;line-height:12px;color:#e6e6e6;">1.450</div>
<svg class="a" style="left:848.2px;top:543.5px;" width="9" height="9" viewBox="0 0 9 9"><circle cx="4.5" cy="4.5" r="3.3" fill="#a1a1a1" stroke="#141414" stroke-width="0.7"/></svg>
<div class="a" style="left:860.0px;top:556.5px;width:153.7px;height:13.0px;background:#545454;border-radius:3px;"></div>
<div class="a" style="left:860.0px;top:556.5px;width:76.9px;height:13.0px;background:#4772b3;border-radius:3px;border-top-right-radius:0;border-bottom-right-radius:0;"></div>
<div class="t" style="left:870.0px;top:557.4px;font-size:8.3px;line-height:12px;color:#e6e6e6;">Transmission</div>
<div class="t" style="right:595.3px;top:557.4px;font-size:8.3px;line-height:12px;color:#e6e6e6;">0.500</div>
<svg class="a" style="left:848.2px;top:558.5px;" width="9" height="9" viewBox="0 0 9 9"><circle cx="4.5" cy="4.5" r="3.3" fill="#a1a1a1" stroke="#141414" stroke-width="0.7"/></svg>
<div class="a" style="left:860.0px;top:571.5px;width:153.7px;height:13.0px;background:#545454;border-radius:3px;"></div>
<div class="t" style="left:870.0px;top:572.4px;font-size:8.3px;line-height:12px;color:#e6e6e6;">Transmission Roughness</div>
<div class="t" style="right:595.3px;top:572.4px;font-size:8.3px;line-height:12px;color:#e6e6e6;">0.000</div>
<svg class="a" style="left:848.2px;top:573.5px;" width="9" height="9" viewBox="0 0 9 9"><circle cx="4.5" cy="4.5" r="3.3" fill="#a1a1a1" stroke="#141414" stroke-width="0.7"/></svg>
<div class="t" style="left:860.0px;top:586.7px;font-size:8.3px;line-height:12px;color:#e6e6e6;">Emission</div>
<div class="a" style="left:925.0px;top:585.8px;width:88.7px;height:13.0px;background:#000000;border-radius:3px;"></div>
<svg class="a" style="left:848.2px;top:587.8px;" width="9" height="9" viewBox="0 0 9 9"><circle cx="4.5" cy="4.5" r="3.3" fill="#c7c729" stroke="#141414" stroke-width="0.7"/></svg>
<div class="a" style="left:860.0px;top:600.5px;width:153.7px;height:13.0px;background:#545454;border-radius:3px;"></div>
<div class="t" style="left:870.0px;top:601.4px;font-size:8.3px;line-height:12px;color:#e6e6e6;">Emission Strength</div>
<div class="t" style="right:595.3px;top:601.4px;font-size:8.3px;line-height:12px;color:#e6e6e6;">1.000</div>
<svg class="a" style="left:848.2px;top:602.5px;" width="9" height="9" viewBox="0 0 9 9"><circle cx="4.5" cy="4.5" r="3.3" fill="#a1a1a1" stroke="#141414" stroke-width="0.7"/></svg>
<div class="a" style="left:860.0px;top:614.9px;width:153.7px;height:13.0px;background:#545454;border-radius:3px;"></div>
<div class="a" style="left:860.0px;top:614.9px;width:153.7px;height:13.0px;background:#4772b3;border-radius:3px;"></div>
<div class="t" style="left:870.0px;top:615.8px;font-size:8.3px;line-height:12px;color:#e6e6e6;">Alpha</div>
<div class="t" style="right:595.3px;top:615.8px;font-size:8.3px;line-height:12px;color:#e6e6e6;">1.000</div>
<svg class="a" style="left:848.2px;top:616.9px;" width="9" height="9" viewBox="0 0 9 9"><circle cx="4.5" cy="4.5" r="3.3" fill="#a1a1a1" stroke="#141414" stroke-width="0.7"/></svg>
<div class="t" style="left:860.0px;top:630.4px;font-size:8.3px;line-height:12px;color:#e6e6e6;">Normal</div>
<svg class="a" style="left:848.2px;top:631.5px;" width="9" height="9" viewBox="0 0 9 9"><circle cx="4.5" cy="4.5" r="3.3" fill="#6363c7" stroke="#141414" stroke-width="0.7"/></svg>
<div class="t" style="left:860.0px;top:645.1px;font-size:8.3px;line-height:12px;color:#e6e6e6;">Clearcoat Normal</div>
<svg class="a" style="left:848.2px;top:646.2px;" width="9" height="9" viewBox="0 0 9 9"><circle cx="4.5" cy="4.5" r="3.3" fill="#6363c7" stroke="#141414" stroke-width="0.7"/></svg>
<div class="t" style="left:860.0px;top:659.8px;font-size:8.3px;line-height:12px;color:#e6e6e6;">Tangent</div>
<svg class="a" style="left:848.2px;top:660.9px;" width="9" height="9" viewBox="0 0 9 9"><circle cx="4.5" cy="4.5" r="3.3" fill="#6363c7" stroke="#141414" stroke-width="0.7"/></svg>
<div class="a" style="left:1345.0px;top:352.0px;width:99.0px;height:83.8px;background:rgba(0,0,0,0.42);border-radius:4px;"></div>
<div class="a" style="left:1346.0px;top:353.0px;width:97.0px;height:81.0px;background:#303030;border-radius:3px;"></div>
<div class="a" style="left:1346.0px;top:353.0px;width:97.0px;height:13.5px;background:#3f1e28;border-radius:3px;border-bottom-left-radius:0;border-bottom-right-radius:0;"></div>
<svg class="a" style="left:1352.5px;top:357.1px;" width="7.6" height="5.2" viewBox="0 0 7.6 5.2"><polyline points="1,1 3.8,4.2 6.6,1" fill="none" stroke="rgba(255,255,255,0.78)" stroke-width="1.3" stroke-linecap="round" stroke-linejoin="round"/></svg>
<div class="t" style="left:1363.0px;top:353.3px;font-size:8.3px;line-height:12px;color:rgba(255,255,255,0.86);letter-spacing:-0.1px">Material Output</div>
<div class="a" style="left:1353.0px;top:370.0px;width:82.4px;height:12.0px;background:#282828;border-radius:3px;"></div>
<div class="t" style="left:1358.0px;top:370.4px;font-size:8.3px;line-height:12px;color:#e6e6e6;">All</div>
<svg class="a" style="left:1426.4px;top:374.3px;" width="6" height="4.4" viewBox="0 0 6 4.4"><polyline points="1,1 3.0,3.4 5,1" fill="none" stroke="#dcdcdc" stroke-width="1.2" stroke-linecap="round" stroke-linejoin="round"/></svg>
<div class="t" style="left:1353.0px;top:386.9px;font-size:8.3px;line-height:12px;color:#e6e6e6;">Surface</div>
<svg class="a" style="left:1341.2px;top:388.0px;" width="9" height="9" viewBox="0 0 9 9"><circle cx="4.5" cy="4.5" r="3.3" fill="#63c763" stroke="#141414" stroke-width="0.7"/></svg>
<div class="t" style="left:1353.0px;top:401.9px;font-size:8.3px;line-height:12px;color:#e6e6e6;">Volume</div>
<svg class="a" style="left:1341.2px;top:403.0px;" width="9" height="9" viewBox="0 0 9 9"><circle cx="4.5" cy="4.5" r="3.3" fill="#63c763" stroke="#141414" stroke-width="0.7"/></svg>
<div class="t" style="left:1353.0px;top:417.4px;font-size:8.3px;line-height:12px;color:#e6e6e6;">Displacement</div>
<svg class="a" style="left:1341.2px;top:418.5px;" width="9" height="9" viewBox="0 0 9 9"><circle cx="4.5" cy="4.5" r="3.3" fill="#6363c7" stroke="#141414" stroke-width="0.7"/></svg>
<div class="a" style="left:1181.0px;top:493.0px;width:99.0px;height:115.8px;background:rgba(0,0,0,0.42);border-radius:4px;"></div>
<div class="a" style="left:1182.0px;top:494.0px;width:97.0px;height:113.0px;background:#303030;border-radius:3px;"></div>
<div class="a" style="left:1182.0px;top:494.0px;width:97.0px;height:13.5px;background:#3d3c82;border-radius:3px;border-bottom-left-radius:0;border-bottom-right-radius:0;"></div>
<svg class="a" style="left:1188.5px;top:498.1px;" width="7.6" height="5.2" viewBox="0 0 7.6 5.2"><polyline points="1,1 3.8,4.2 6.6,1" fill="none" stroke="rgba(255,255,255,0.78)" stroke-width="1.3" stroke-linecap="round" stroke-linejoin="round"/></svg>
<div class="t" style="left:1199.0px;top:494.3px;font-size:8.3px;line-height:12px;color:rgba(255,255,255,0.86);letter-spacing:-0.1px">Displacement</div>
<div class="t" style="right:329.0px;top:511.4px;font-size:8.3px;line-height:12px;color:#e6e6e6;">Displacement</div>
<svg class="a" style="left:1274.2px;top:512.5px;" width="9" height="9" viewBox="0 0 9 9"><circle cx="4.5" cy="4.5" r="3.3" fill="#6363c7" stroke="#141414" stroke-width="0.7"/></svg>
<div class="a" style="left:1189.0px;top:531.2px;width:82.4px;height:12.0px;background:#282828;border-radius:3px;"></div>
<div class="t" style="left:1194.0px;top:531.6px;font-size:8.3px;line-height:12px;color:#e6e6e6;">Object Space</div>
<svg class="a" style="left:1262.4px;top:535.5px;" width="6" height="4.4" viewBox="0 0 6 4.4"><polyline points="1,1 3.0,3.4 5,1" fill="none" stroke="#dcdcdc" stroke-width="1.2" stroke-linecap="round" stroke-linejoin="round"/></svg>
<div class="t" style="left:1189.0px;top:548.2px;font-size:8.3px;line-height:12px;color:#e6e6e6;">Height</div>
<svg class="a" style="left:1177.2px;top:549.3px;" width="9" height="9" viewBox="0 0 9 9"><circle cx="4.5" cy="4.5" r="3.3" fill="#a1a1a1" stroke="#141414" stroke-width="0.7"/></svg>
<div class="a" style="left:1189.0px;top:561.9px;width:82.4px;height:13.0px;background:#545454;border-radius:3px;"></div>
<div class="t" style="left:1199.0px;top:562.8px;font-size:8.3px;line-height:12px;color:#e6e6e6;">Midlevel</div>
<div class="t" style="right:337.6px;top:562.8px;font-size:8.3px;line-height:12px;color:#e6e6e6;">0.500</div>
<svg class="a" style="left:1177.2px;top:563.9px;" width="9" height="9" viewBox="0 0 9 9"><circle cx="4.5" cy="4.5" r="3.3" fill="#a1a1a1" stroke="#141414" stroke-width="0.7"/></svg>
<div class="a" style="left:1189.0px;top:576.6px;width:82.4px;height:13.0px;background:#545454;border-radius:3px;"></div>
<div class="t" style="left:1199.0px;top:577.5px;font-size:8.3px;line-height:12px;color:#e6e6e6;">Scale</div>
<div class="t" style="right:337.6px;top:577.5px;font-size:8.3px;line-height:12px;color:#e6e6e6;">0.020</div>
<svg class="a" style="left:1177.2px;top:578.6px;" width="9" height="9" viewBox="0 0 9 9"><circle cx="4.5" cy="4.5" r="3.3" fill="#a1a1a1" stroke="#141414" stroke-width="0.7"/></svg>
<div class="t" style="left:1189.0px;top:592.1px;font-size:8.3px;line-height:12px;color:#e6e6e6;">Normal</div>
<svg class="a" style="left:1177.2px;top:593.2px;" width="9" height="9" viewBox="0 0 9 9"><circle cx="4.5" cy="4.5" r="3.3" fill="#6363c7" stroke="#141414" stroke-width="0.7"/></svg>
<div class="a" style="left:370.0px;top:705.6px;width:100.0px;height:145.8px;background:rgba(0,0,0,0.42);border-radius:4px;"></div>
<div class="a" style="left:371.0px;top:706.6px;width:98.0px;height:143.0px;background:#303030;border-radius:3px;"></div>
<div class="a" style="left:371.0px;top:706.6px;width:98.0px;height:13.5px;background:#7a461d;border-radius:3px;border-bottom-left-radius:0;border-bottom-right-radius:0;"></div>
<svg class="a" style="left:377.5px;top:710.8px;" width="7.6" height="5.2" viewBox="0 0 7.6 5.2"><polyline points="1,1 3.8,4.2 6.6,1" fill="none" stroke="rgba(255,255,255,0.78)" stroke-width="1.3" stroke-linecap="round" stroke-linejoin="round"/></svg>
<div class="t" style="left:388.0px;top:707.0px;font-size:8.3px;line-height:12px;color:rgba(255,255,255,0.86);letter-spacing:-0.1px">Noise Texture</div>
<div class="t" style="right:1139.0px;top:724.4px;font-size:8.3px;line-height:12px;color:#e6e6e6;">Fac</div>
<svg class="a" style="left:464.2px;top:725.5px;" width="9" height="9" viewBox="0 0 9 9"><circle cx="4.5" cy="4.5" r="3.3" fill="#a1a1a1" stroke="#141414" stroke-width="0.7"/></svg>
<div class="t" style="right:1139.0px;top:739.2px;font-size:8.3px;line-height:12px;color:#e6e6e6;">Color</div>
<svg class="a" style="left:464.2px;top:740.3px;" width="9" height="9" viewBox="0 0 9 9"><circle cx="4.5" cy="4.5" r="3.3" fill="#c7c729" stroke="#141414" stroke-width="0.7"/></svg>
<div class="a" style="left:378.0px;top:758.2px;width:83.4px;height:12.0px;background:#282828;border-radius:3px;"></div>
<div class="t" style="left:383.0px;top:758.6px;font-size:8.3px;line-height:12px;color:#e6e6e6;">3D</div>
<svg class="a" style="left:452.4px;top:762.5px;" width="6" height="4.4" viewBox="0 0 6 4.4"><polyline points="1,1 3.0,3.4 5,1" fill="none" stroke="#dcdcdc" stroke-width="1.2" stroke-linecap="round" stroke-linejoin="round"/></svg>
<div class="t" style="left:378.0px;top:775.4px;font-size:8.3px;line-height:12px;color:#e6e6e6;">Vector</div>
<svg class="a" style="left:366.2px;top:776.5px;" width="9" height="9" viewBox="0 0 9 9"><circle cx="4.5" cy="4.5" r="3.3" fill="#6363c7" stroke="#141414" stroke-width="0.7"/></svg>
<div class="a" style="left:378.0px;top:788.9px;width:83.4px;height:13.0px;background:#545454;border-radius:3px;"></div>
<div class="t" style="left:388.0px;top:789.8px;font-size:8.3px;line-height:12px;color:#e6e6e6;">Scale</div>
<div class="t" style="right:1147.6px;top:789.8px;font-size:8.3px;line-height:12px;color:#e6e6e6;">50.000</div>
<svg class="a" style="left:366.2px;top:790.9px;" width="9" height="9" viewBox="0 0 9 9"><circle cx="4.5" cy="4.5" r="3.3" fill="#a1a1a1" stroke="#141414" stroke-width="0.7"/></svg>
<div class="a" style="left:378.0px;top:803.7px;width:83.4px;height:13.0px;background:#545454;border-radius:3px;"></div>
<div class="t" style="left:388.0px;top:804.6px;font-size:8.3px;line-height:12px;color:#e6e6e6;">Detail</div>
<div class="t" style="right:1147.6px;top:804.6px;font-size:8.3px;line-height:12px;color:#e6e6e6;">2.000</div>
<svg class="a" style="left:366.2px;top:805.7px;" width="9" height="9" viewBox="0 0 9 9"><circle cx="4.5" cy="4.5" r="3.3" fill="#a1a1a1" stroke="#141414" stroke-width="0.7"/></svg>
<div class="a" style="left:378.0px;top:818.6px;width:83.4px;height:13.0px;background:#545454;border-radius:3px;"></div>
<div class="a" style="left:378.0px;top:818.6px;width:41.7px;height:13.0px;background:#4772b3;border-radius:3px;border-top-right-radius:0;border-bottom-right-radius:0;"></div>
<div class="t" style="left:388.0px;top:819.5px;font-size:8.3px;line-height:12px;color:#e6e6e6;">Roughnes</div>
<div class="t" style="right:1147.6px;top:819.5px;font-size:8.3px;line-height:12px;color:#e6e6e6;">0.500</div>
<svg class="a" style="left:366.2px;top:820.6px;" width="9" height="9" viewBox="0 0 9 9"><circle cx="4.5" cy="4.5" r="3.3" fill="#a1a1a1" stroke="#141414" stroke-width="0.7"/></svg>
<div class="a" style="left:378.0px;top:833.3px;width:83.4px;height:13.0px;background:#545454;border-radius:3px;"></div>
<div class="t" style="left:388.0px;top:834.2px;font-size:8.3px;line-height:12px;color:#e6e6e6;">Distortion</div>
<div class="t" style="right:1147.6px;top:834.2px;font-size:8.3px;line-height:12px;color:#e6e6e6;">0.000</div>
<svg class="a" style="left:366.2px;top:835.3px;" width="9" height="9" viewBox="0 0 9 9"><circle cx="4.5" cy="4.5" r="3.3" fill="#a1a1a1" stroke="#141414" stroke-width="0.7"/></svg>
<div class="a" style="left:542.0px;top:697.0px;width:100.0px;height:115.3px;background:rgba(0,0,0,0.42);border-radius:4px;"></div>
<div class="a" style="left:543.0px;top:698.0px;width:98.0px;height:112.5px;background:#303030;border-radius:3px;"></div>
<div class="a" style="left:543.0px;top:698.0px;width:98.0px;height:13.5px;background:#3d3c82;border-radius:3px;border-bottom-left-radius:0;border-bottom-right-radius:0;"></div>
<svg class="a" style="left:549.5px;top:702.1px;" width="7.6" height="5.2" viewBox="0 0 7.6 5.2"><polyline points="1,1 3.8,4.2 6.6,1" fill="none" stroke="rgba(255,255,255,0.78)" stroke-width="1.3" stroke-linecap="round" stroke-linejoin="round"/></svg>
<div class="t" style="left:560.0px;top:698.4px;font-size:8.3px;line-height:12px;color:rgba(255,255,255,0.86);letter-spacing:-0.1px">Bump</div>
<div class="t" style="right:967.0px;top:715.6px;font-size:8.3px;line-height:12px;color:#e6e6e6;">Normal</div>
<svg class="a" style="left:636.2px;top:716.7px;" width="9" height="9" viewBox="0 0 9 9"><circle cx="4.5" cy="4.5" r="3.3" fill="#6363c7" stroke="#141414" stroke-width="0.7"/></svg>
<div class="a" style="left:550.0px;top:736.1px;width:9.0px;height:9.0px;background:#545454;border-radius:2px;"></div>
<div class="t" style="left:561.0px;top:735.0px;font-size:8.3px;line-height:12px;color:#e6e6e6;">Invert</div>
<div class="a" style="left:550.0px;top:750.5px;width:83.4px;height:13.0px;background:#545454;border-radius:3px;"></div>
<div class="a" style="left:550.0px;top:750.5px;width:25.0px;height:13.0px;background:#4772b3;border-radius:3px;border-top-right-radius:0;border-bottom-right-radius:0;"></div>
<div class="t" style="left:560.0px;top:751.4px;font-size:8.3px;line-height:12px;color:#e6e6e6;">Strength</div>
<div class="t" style="right:975.6px;top:751.4px;font-size:8.3px;line-height:12px;color:#e6e6e6;">0.300</div>
<svg class="a" style="left:538.2px;top:752.5px;" width="9" height="9" viewBox="0 0 9 9"><circle cx="4.5" cy="4.5" r="3.3" fill="#a1a1a1" stroke="#141414" stroke-width="0.7"/></svg>
<div class="a" style="left:550.0px;top:765.3px;width:83.4px;height:13.0px;background:#545454;border-radius:3px;"></div>
<div class="t" style="left:560.0px;top:766.2px;font-size:8.3px;line-height:12px;color:#e6e6e6;">Distance</div>
<div class="t" style="right:975.6px;top:766.2px;font-size:8.3px;line-height:12px;color:#e6e6e6;">1.000</div>
<svg class="a" style="left:538.2px;top:767.3px;" width="9" height="9" viewBox="0 0 9 9"><circle cx="4.5" cy="4.5" r="3.3" fill="#a1a1a1" stroke="#141414" stroke-width="0.7"/></svg>
<div class="t" style="left:550.0px;top:781.1px;font-size:8.3px;line-height:12px;color:#e6e6e6;">Height</div>
<svg class="a" style="left:538.2px;top:782.2px;" width="9" height="9" viewBox="0 0 9 9"><circle cx="4.5" cy="4.5" r="3.3" fill="#a1a1a1" stroke="#141414" stroke-width="0.7"/></svg>
<div class="t" style="left:550.0px;top:795.9px;font-size:8.3px;line-height:12px;color:#e6e6e6;">Normal</div>
<svg class="a" style="left:538.2px;top:797.0px;" width="9" height="9" viewBox="0 0 9 9"><circle cx="4.5" cy="4.5" r="3.3" fill="#6363c7" stroke="#141414" stroke-width="0.7"/></svg>
<div class="a" style="left:0.0px;top:0.0px;width:1600.0px;height:13.5px;background:#1f1f1f;border-radius:0px;"></div>
<div class="a" style="left:0.0px;top:13.5px;width:1600.0px;height:1.5px;background:#151515;border-radius:0px;"></div>
<div class="a" style="left:0.0px;top:15.0px;width:1600.0px;height:15.0px;background:#1e1e1e;border-radius:0px;"></div>
<div class="a" style="left:0.0px;top:30.0px;width:1600.0px;height:1.0px;background:#1b1b1b;border-radius:0px;"></div>
<svg class="a" style="left:4.0px;top:2.0px;" width="12" height="11" viewBox="0 0 12 11"><circle cx="6.6" cy="6.2" r="2.7" fill="none" stroke="#e0e0e0" stroke-width="1.2"/><circle cx="6.6" cy="6.3" r="0.9" fill="#e0e0e0"/><path d="M3.2 1.5 L6.3 3.5 M1.3 4.6 H4.6 M1.8 7.4 L4.4 5.6" stroke="#e0e0e0" stroke-width="1.2" stroke-linecap="round"/></svg>
<div class="t" style="left:19.5px;top:1.6px;font-size:6.6px;line-height:12px;color:#d6d6d6;-webkit-text-stroke:0.05px currentColor">File</div>
<div class="t" style="left:38.3px;top:1.6px;font-size:6.6px;line-height:12px;color:#d6d6d6;-webkit-text-stroke:0.05px currentColor">Edit</div>
<div class="t" style="left:58.8px;top:1.6px;font-size:6.6px;line-height:12px;color:#d6d6d6;-webkit-text-stroke:0.05px currentColor">Render</div>
<div class="t" style="left:88.8px;top:1.6px;font-size:6.6px;line-height:12px;color:#d6d6d6;-webkit-text-stroke:0.05px currentColor">Window</div>
<div class="t" style="left:121.8px;top:1.6px;font-size:6.6px;line-height:12px;color:#d6d6d6;-webkit-text-stroke:0.05px currentColor">Help</div>
<div class="a" style="left:149.3px;top:1.5px;width:68.7px;height:11.0px;background:#474747;border-radius:2px;"></div>
<svg class="a" style="left:152.0px;top:3.0px;" width="9" height="8" viewBox="0 0 9 8"><rect x="0.5" y="0.5" width="7.5" height="6.5" rx="1" fill="none" stroke="#cfcfcf" stroke-width="0.8"/><path d="M5.5 3.7 H2.2 M3.6 2.3 L2.2 3.7 L3.6 5.1" fill="none" stroke="#cfcfcf" stroke-width="0.8"/></svg>
<div class="t" style="left:163.8px;top:1.6px;font-size:6.6px;line-height:12px;color:#d6d6d6;-webkit-text-stroke:0.05px currentColor">Back to Previous</div>
<div class="a" style="left:4.0px;top:16.2px;width:17.7px;height:12.1px;background:#222222;border-radius:3px;"></div>
<svg class="a" style="left:6.3px;top:17.8px;" width="10" height="10" viewBox="0 0 10 10"><circle cx="5" cy="5" r="3.9" fill="none" stroke="#c8c8c8" stroke-width="0.9"/><path d="M2.2 3.2 Q3 1.8 4.5 1.6 L5.2 4.2 L7.6 3.6 Q8 5.5 6.8 7 Q4.5 8.2 2.8 6.5 Z" fill="#454545"/><circle cx="3.2" cy="3" r="0.9" fill="#bdbdbd"/></svg>
<svg class="a" style="left:15.4px;top:20.9px;" width="5.2" height="3.8" viewBox="0 0 5.2 3.8"><polyline points="1,1 2.6,2.8 4.2,1" fill="none" stroke="#d0d0d0" stroke-width="0.9" stroke-linecap="round" stroke-linejoin="round"/></svg>
<div class="a" style="left:25.0px;top:17.0px;width:51.0px;height:11.0px;background:#232323;border-radius:3px;"></div>
<svg class="a" style="left:27.0px;top:18.0px;" width="9" height="9" viewBox="0 0 9 9"><rect x="2" y="2" width="5" height="5" fill="#e8e8e8"/><path d="M0.7 2.5V0.7H2.5M6.5 0.7H8.3V2.5M8.3 6.5V8.3H6.5M2.5 8.3H0.7V6.5" fill="none" stroke="#9a9a9a" stroke-width="0.7"/></svg>
<div class="t" style="left:39.8px;top:17.1px;font-size:6.6px;line-height:12px;color:#d6d6d6;-webkit-text-stroke:0.05px currentColor">Object</div>
<svg class="a" style="left:69.2px;top:21.0px;" width="5.5" height="4" viewBox="0 0 5.5 4"><polyline points="1,1 2.75,3 4.5,1" fill="none" stroke="#d0d0d0" stroke-width="0.9" stroke-linecap="round" stroke-linejoin="round"/></svg>
<div class="t" style="left:83.0px;top:17.1px;font-size:6.6px;line-height:12px;color:#d6d6d6;-webkit-text-stroke:0.05px currentColor">View</div>
<div class="t" style="left:106.3px;top:17.1px;font-size:6.6px;line-height:12px;color:#d6d6d6;-webkit-text-stroke:0.05px currentColor">Select</div>
<div class="t" style="left:133.3px;top:17.1px;font-size:6.6px;line-height:12px;color:#d6d6d6;-webkit-text-stroke:0.05px currentColor">Add</div>
<div class="t" style="left:153.5px;top:17.1px;font-size:6.6px;line-height:12px;color:#d6d6d6;-webkit-text-stroke:0.05px currentColor">Node</div>
<div class="a" style="left:177.0px;top:18.5px;width:7.5px;height:8.0px;background:#4772b3;border-radius:1.5px;"></div>
<svg class="a" style="left:177.0px;top:18.5px;" width="8" height="8" viewBox="0 0 8 8"><polyline points="1.8,4 3.3,5.6 6.2,2.2" fill="none" stroke="#fff" stroke-width="1" stroke-linecap="round"/></svg>
<div class="t" style="left:186.3px;top:17.1px;font-size:6.6px;line-height:12px;color:#d6d6d6;-webkit-text-stroke:0.05px currentColor">Use Nodes</div>
<div class="a" style="left:696.0px;top:17.0px;width:45.0px;height:11.0px;background:#262626;border-radius:3px;"></div>
<div class="t" style="left:700.6px;top:16.6px;font-size:6.6px;line-height:12px;color:#d6d6d6;-webkit-text-stroke:0.05px currentColor">Slot 1</div>
<svg class="a" style="left:734.2px;top:20.5px;" width="5.5" height="4" viewBox="0 0 5.5 4"><polyline points="1,1 2.75,3 4.5,1" fill="none" stroke="#d0d0d0" stroke-width="0.9" stroke-linecap="round" stroke-linejoin="round"/></svg>
<div class="a" style="left:743.8px;top:17.0px;width:17.8px;height:11.0px;background:#262626;border-radius:3px;border-top-right-radius:0;border-bottom-right-radius:0;"></div>
<svg class="a" style="left:746.0px;top:18.0px;" width="9" height="9" viewBox="0 0 9 9"><circle cx="4.5" cy="4.5" r="3.8" fill="#e6e6e6"/><path d="M4.5 0.7 A3.8 3.8 0 0 1 8.3 4.5 H4.5 Z" fill="#333"/><path d="M4.5 4.5 H0.7 A3.8 3.8 0 0 0 4.5 8.3 Z" fill="#333"/></svg>
<svg class="a" style="left:755.0px;top:20.9px;" width="5" height="3.8" viewBox="0 0 5 3.8"><polyline points="1,1 2.5,2.8 4,1" fill="none" stroke="#d0d0d0" stroke-width="0.8" stroke-linecap="round" stroke-linejoin="round"/></svg>
<div class="a" style="left:761.6px;top:17.0px;width:66.4px;height:11.0px;background:#161616;border-radius:0px;"></div>
<div class="t" style="left:765.3px;top:16.6px;font-size:6.6px;line-height:12px;color:#d6d6d6;-webkit-text-stroke:0.05px currentColor">Inside Algae</div>
<div class="a" style="left:828.0px;top:17.0px;width:16.0px;height:11.0px;background:#484848;border-radius:0px;"></div>
<div class="t" style="left:736.0px;width:200px;text-align:center;top:16.6px;font-size:6.6px;line-height:12px;color:#d6d6d6;-webkit-text-stroke:0.05px currentColor">13</div>
<div class="a" style="left:844.0px;top:17.0px;width:12.3px;height:11.0px;background:#4772b3;border-radius:0px;"></div>
<svg class="a" style="left:846.0px;top:17.5px;" width="9" height="9" viewBox="0 0 9 9"><path d="M4.5 0.5 L8 1.8 V4.3 Q8 7.3 4.5 8.5 Q1 7.3 1 4.3 V1.8 Z" fill="#f0f0f0"/><polyline points="2.6,4.4 4,5.8 6.4,3" fill="none" stroke="#4772b3" stroke-width="1"/></svg>
<div class="a" style="left:856.3px;top:17.0px;width:21.5px;height:11.0px;background:#484848;border-radius:3px;border-top-left-radius:0;border-bottom-left-radius:0;"></div>
<svg class="a" style="left:858.0px;top:17.5px;" width="9" height="9" viewBox="0 0 9 9"><path d="M3 1.5 H6.3 L8.3 3.5 V7.5 H3 Z" fill="none" stroke="#d8d8d8" stroke-width="0.8"/><path d="M6.2 1.5 V3.6 H8.3" fill="#d8d8d8" stroke="#d8d8d8" stroke-width="0.6"/><path d="M1.3 3 V8.8 H6.5" fill="none" stroke="#a0a0a0" stroke-width="0.8"/></svg>
<svg class="a" style="left:869.0px;top:18.5px;" width="7" height="7" viewBox="0 0 7 7"><path d="M1 1 L6 6 M6 1 L1 6" stroke="#cfcfcf" stroke-width="0.9"/></svg>
<svg class="a" style="left:881.0px;top:17.5px;" width="10" height="10" viewBox="0 0 10 10"><path d="M1.5 8.8 L4.3 6" stroke="#b0b0b0" stroke-width="0.9"/><path d="M2.9 4.4 L5.9 7.4 L6.2 5.8 L8 4 L9 4.1 L6.1 1.2 L6.2 2.2 L4.4 4 Z" fill="none" stroke="#b8b8b8" stroke-width="0.8"/></svg>
<div class="a" style="left:1377.8px;top:2.0px;width:16.7px;height:10.2px;background:#262626;border-radius:3px;border-top-right-radius:0;border-bottom-right-radius:0;"></div>
<svg class="a" style="left:1379.0px;top:2.5px;" width="10" height="9" viewBox="0 0 10 9"><path d="M3 1 Q1 4 1 5.5 A2 2 0 0 0 5 5.5 Q5 4 3 1Z" fill="#d8d8d8"/><circle cx="6.8" cy="2.3" r="1.2" fill="#d8d8d8"/><circle cx="6.5" cy="6.5" r="2" fill="none" stroke="#d8d8d8" stroke-width="0.8"/></svg>
<svg class="a" style="left:1388.5px;top:5.5px;" width="5" height="3.8" viewBox="0 0 5 3.8"><polyline points="1,1 2.5,2.8 4,1" fill="none" stroke="#d0d0d0" stroke-width="0.8" stroke-linecap="round" stroke-linejoin="round"/></svg>
<div class="a" style="left:1394.5px;top:1.5px;width:67.2px;height:10.5px;background:#171717;border-radius:0px;"></div>
<div class="t" style="left:1399.2px;top:1.6px;font-size:6.6px;line-height:12px;color:#d6d6d6;-webkit-text-stroke:0.05px currentColor">Scene</div>
<svg class="a" style="left:1451.0px;top:2.5px;" width="9" height="9" viewBox="0 0 9 9"><path d="M1.2 8.3 L3.8 5.7" stroke="#b0b0b0" stroke-width="0.9"/><path d="M2.6 4.2 L5.3 6.9 L5.6 5.4 L7.2 3.8 L8.2 3.9 L5.6 1.3 L5.7 2.3 L4.1 3.9 Z" fill="#c0c0c0"/></svg>
<div class="a" style="left:1462.5px;top:2.0px;width:21.9px;height:10.2px;background:#363636;border-radius:3px;border-top-left-radius:0;border-bottom-left-radius:0;"></div>
<svg class="a" style="left:1464.0px;top:2.7px;" width="9" height="9" viewBox="0 0 9 9"><path d="M3 1.5 H6.3 L8.3 3.5 V7.5 H3 Z" fill="none" stroke="#c8c8c8" stroke-width="0.8"/><path d="M6.2 1.5 V3.6 H8.3" fill="#c8c8c8" stroke="#c8c8c8" stroke-width="0.6"/><path d="M1.3 3 V8.8 H6.5" fill="none" stroke="#a0a0a0" stroke-width="0.8"/></svg>
<svg class="a" style="left:1475.5px;top:4.0px;" width="6" height="6" viewBox="0 0 6 6"><path d="M0.7 0.7 L5.3 5.3 M5.3 0.7 L0.7 5.3" stroke="#8a8a8a" stroke-width="0.8"/></svg>
<div class="a" style="left:1487.5px;top:2.0px;width:18.0px;height:10.2px;background:#262626;border-radius:3px;border-top-right-radius:0;border-bottom-right-radius:0;"></div>
<svg class="a" style="left:1489.0px;top:2.5px;" width="9" height="9" viewBox="0 0 9 9"><rect x="0.5" y="0.5" width="8" height="8" rx="1.5" fill="#6a6a6a"/><path d="M1.5 7.5 L4.5 3 L7.5 7.5Z" fill="#e0e0e0"/></svg>
<svg class="a" style="left:1499.0px;top:5.5px;" width="5" height="3.8" viewBox="0 0 5 3.8"><polyline points="1,1 2.5,2.8 4,1" fill="none" stroke="#d0d0d0" stroke-width="0.8" stroke-linecap="round" stroke-linejoin="round"/></svg>
<div class="a" style="left:1505.5px;top:1.5px;width:67.2px;height:10.5px;background:#171717;border-radius:0px;"></div>
<div class="t" style="left:1509.4px;top:1.6px;font-size:6.6px;line-height:12px;color:#d6d6d6;-webkit-text-stroke:0.05px currentColor">View Layer</div>
<div class="a" style="left:1572.7px;top:2.0px;width:21.8px;height:10.2px;background:#363636;border-radius:3px;border-top-left-radius:0;border-bottom-left-radius:0;"></div>
<svg class="a" style="left:1574.0px;top:2.7px;" width="9" height="9" viewBox="0 0 9 9"><path d="M3 1.5 H6.3 L8.3 3.5 V7.5 H3 Z" fill="none" stroke="#c8c8c8" stroke-width="0.8"/><path d="M6.2 1.5 V3.6 H8.3" fill="#c8c8c8" stroke="#c8c8c8" stroke-width="0.6"/><path d="M1.3 3 V8.8 H6.5" fill="none" stroke="#a0a0a0" stroke-width="0.8"/></svg>
<svg class="a" style="left:1585.5px;top:4.0px;" width="6" height="6" viewBox="0 0 6 6"><path d="M0.7 0.7 L5.3 5.3 M5.3 0.7 L0.7 5.3" stroke="#8a8a8a" stroke-width="0.8"/></svg>
<div class="a" style="left:1528.0px;top:17.0px;width:11.0px;height:10.5px;background:#242424;border-radius:2.5px;"></div>
<svg class="a" style="left:1528.0px;top:17.0px;" width="11" height="11" viewBox="0 0 11 11"><path d="M4.5 3 V9 H9.5" fill="none" stroke="#5c5c5c" stroke-width="0.9"/><path d="M2.5 5 L4.5 2.8 L6.5 5" fill="none" stroke="#5c5c5c" stroke-width="0.9"/></svg>
<div class="a" style="left:1542.0px;top:17.0px;width:10.8px;height:10.5px;background:#474747;border-radius:2.5px;border-top-right-radius:0;border-bottom-right-radius:0;"></div>
<svg class="a" style="left:1542.0px;top:17.0px;" width="11" height="11" viewBox="0 0 11 11"><path d="M3 5.5 L5.5 3 Q7.5 2.5 8.5 4 Q9.3 6 7.6 7.6 L5.6 9.2 M4.6 6.6 L6.2 5.1 Q7 5.6 6.6 6.4 L5 8" fill="none" stroke="#a0a0a0" stroke-width="0.9" stroke-linecap="round"/></svg>
<div class="a" style="left:1552.8px;top:17.0px;width:17.5px;height:10.5px;background:#1f1f1f;border-radius:2.5px;border-top-left-radius:0;border-bottom-left-radius:0;"></div>
<svg class="a" style="left:1554.0px;top:17.0px;" width="10" height="11" viewBox="0 0 10 11"><rect x="1.8" y="2" width="3" height="3" fill="#f0f0f0"/><path d="M3.2 6.2 V10 M7.5 1.5 V10 M1 7.6 H9.5" stroke="#d8d8d8" stroke-width="0.8"/></svg>
<svg class="a" style="left:1564.3px;top:20.6px;" width="5.4" height="4" viewBox="0 0 5.4 4"><polyline points="1,1 2.7,3 4.4,1" fill="none" stroke="#e0e0e0" stroke-width="1.0" stroke-linecap="round" stroke-linejoin="round"/></svg>
<div class="a" style="left:1573.8px;top:17.0px;width:10.2px;height:10.5px;background:#4772b3;border-radius:2.5px;"></div>
<svg class="a" style="left:1573.8px;top:17.0px;" width="10.2" height="10.5" viewBox="0 0 10.2 10.5"><circle cx="4.3" cy="6.3" r="2.9" fill="none" stroke="#cfe0ff" stroke-width="0.9"/><circle cx="6" cy="4.6" r="2.8" fill="#ffffff"/><circle cx="5.8" cy="4.9" r="0.6" fill="#4772b3"/></svg>
<svg class="a" style="left:1586.8px;top:20.6px;" width="5.4" height="4" viewBox="0 0 5.4 4"><polyline points="1,1 2.7,3 4.4,1" fill="none" stroke="#e0e0e0" stroke-width="1.0" stroke-linecap="round" stroke-linejoin="round"/></svg>
<svg class="a" style="left:0.0px;top:39.3px;" width="4" height="7" viewBox="0 0 4 7"><polyline points="0.5,1 2.5,3.5 0.5,6" fill="none" stroke="#c8c8c8" stroke-width="0.9"/></svg>
<svg class="a" style="left:10.0px;top:38.2px;" width="9" height="9" viewBox="0 0 9 9"><rect x="2" y="2" width="5" height="5" fill="#e8e8e8"/><path d="M0.7 2.5V0.7H2.5M6.5 0.7H8.3V2.5M8.3 6.5V8.3H6.5M2.5 8.3H0.7V6.5" fill="none" stroke="#9a9a9a" stroke-width="0.7"/></svg>
<div class="t" style="left:24.0px;top:37.2px;font-size:6.6px;line-height:12px;color:#d6d6d6;-webkit-text-stroke:0.12px currentColor">Plane.026</div>
<svg class="a" style="left:62.5px;top:39.3px;" width="5" height="7" viewBox="0 0 5 7"><polyline points="0.8,1 3.3,3.5 0.8,6" fill="none" stroke="#d0d0d0" stroke-width="1.1"/></svg>
<svg class="a" style="left:71.0px;top:38.0px;" width="10" height="10" viewBox="0 0 10 10"><path d="M1.4 1.2 L7.7 1.3 L4.5 7.6 Z" fill="none" stroke="#d8d8d8" stroke-width="1.2" stroke-linejoin="round"/><circle cx="1.6" cy="1.5" r="1.1" fill="#d8d8d8"/><circle cx="7.6" cy="1.5" r="1.1" fill="none" stroke="#d8d8d8" stroke-width="0.8"/><circle cx="4.5" cy="7.4" r="1.2" fill="#d0d0d0"/></svg>
<div class="t" style="left:84.8px;top:37.2px;font-size:6.6px;line-height:12px;color:#d6d6d6;-webkit-text-stroke:0.12px currentColor">Plane.030</div>
<svg class="a" style="left:123.5px;top:39.3px;" width="5" height="7" viewBox="0 0 5 7"><polyline points="0.8,1 3.3,3.5 0.8,6" fill="none" stroke="#d0d0d0" stroke-width="1.1"/></svg>
<svg class="a" style="left:132.0px;top:38.2px;" width="9" height="9" viewBox="0 0 9 9"><circle cx="4.5" cy="4.5" r="3.8" fill="#e6e6e6"/><path d="M4.5 0.7 A3.8 3.8 0 0 1 8.3 4.5 H4.5 Z" fill="#333"/><path d="M4.5 4.5 H0.7 A3.8 3.8 0 0 0 4.5 8.3 Z" fill="#333"/></svg>
<div class="t" style="left:145.8px;top:37.2px;font-size:6.6px;line-height:12px;color:#d6d6d6;-webkit-text-stroke:0.12px currentColor">Inside Algae</div>
<svg class="a" style="left:1595.0px;top:38.5px;" width="4" height="7" viewBox="0 0 4 7"><polyline points="3.5,1 1,3.5 3.5,6" fill="none" stroke="#707070" stroke-width="0.9"/></svg>
<div class="a" style="left:5.0px;top:897.0px;width:1590.0px;height:2.0px;background:#3a3a3a;border-radius:1px;"></div>
<div class="a" style="left:1597.0px;top:36.0px;width:2.0px;height:855.0px;background:#303030;border-radius:1px;"></div>
</div></body></html>
